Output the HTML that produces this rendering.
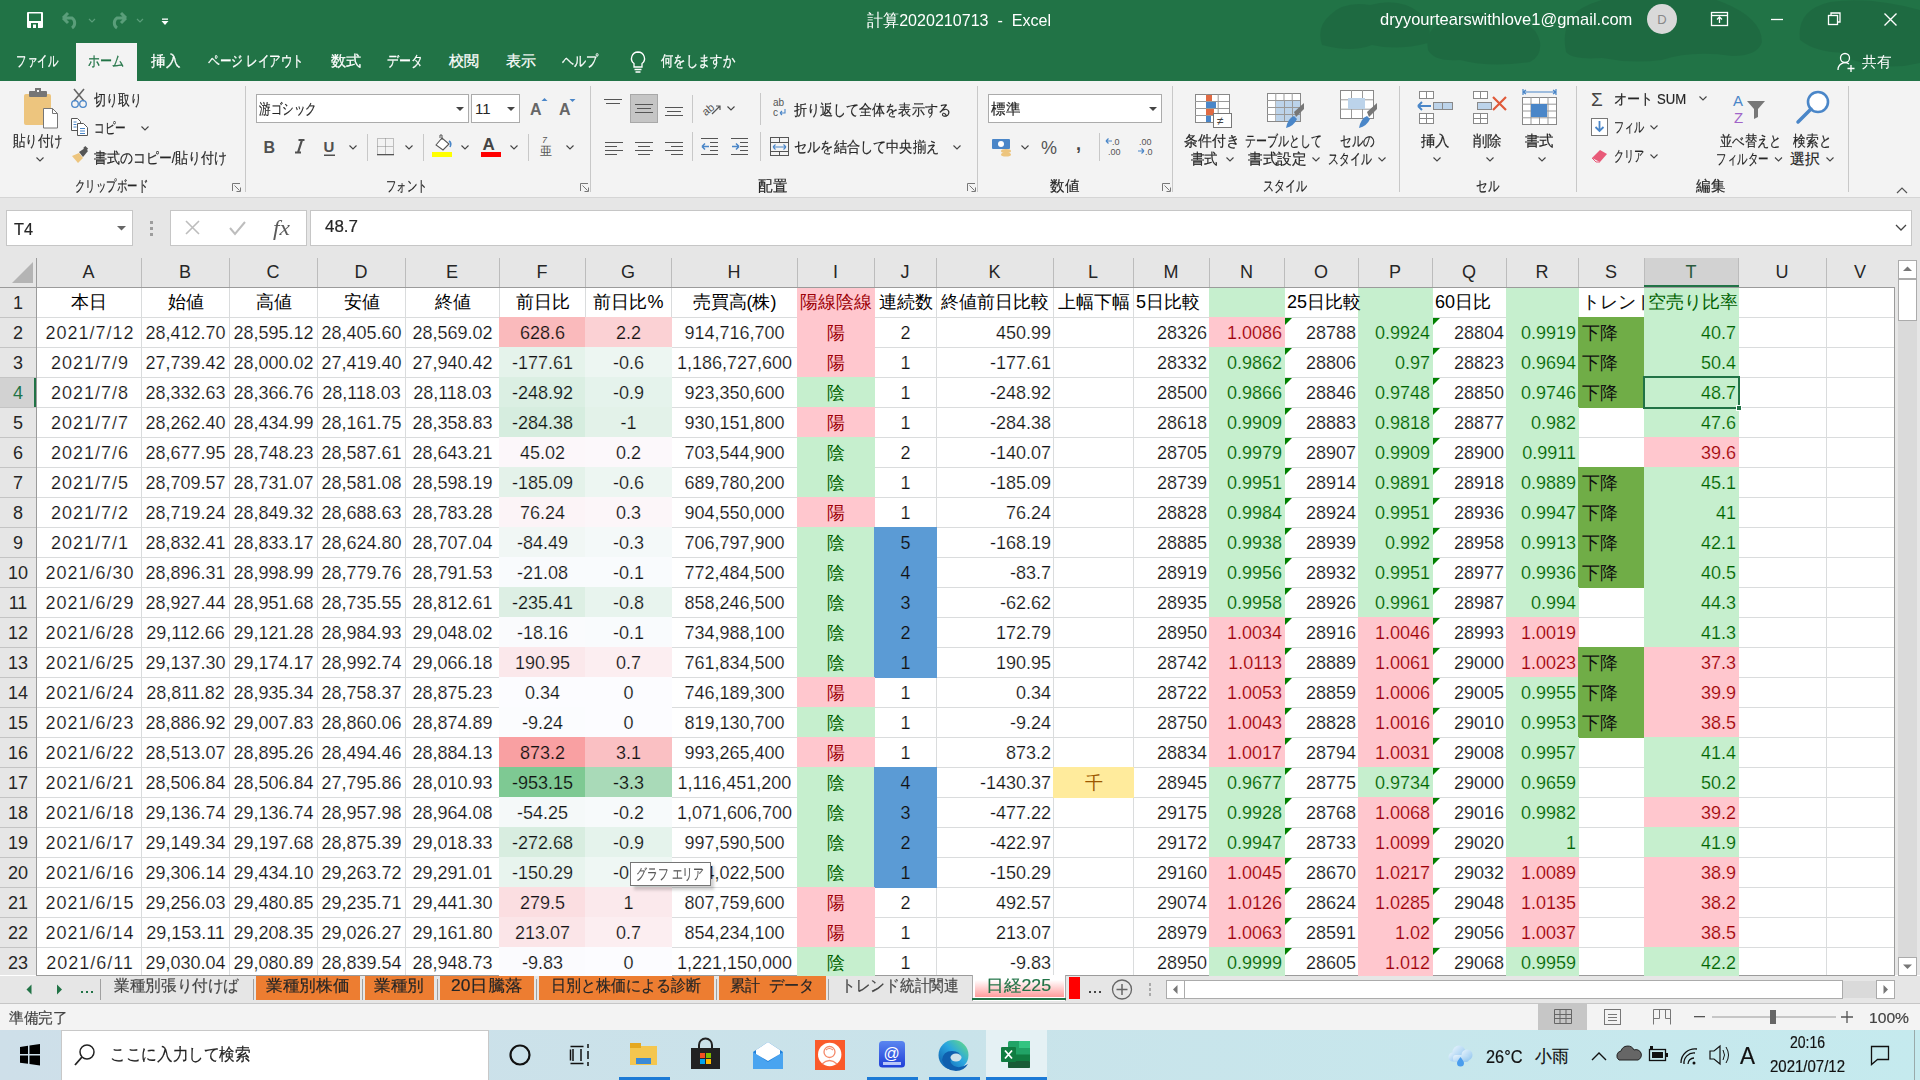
<!DOCTYPE html>
<html lang="ja"><head><meta charset="utf-8"><title>Excel</title>
<style>
html,body{margin:0;padding:0;width:1920px;height:1080px;overflow:hidden;background:#fff}
body{position:relative;font-family:"Liberation Sans",sans-serif;color:#262626}
body div,body svg{position:absolute;box-sizing:border-box}
</style></head><body>
<div style="left:0px;top:0px;width:1920px;height:81px;background:#217346"></div>
<svg style="left:1280px;top:0" width="640" height="81" viewBox="1280 0 640 81">
<g fill="#1e6840" opacity=".75">
<path d="M1322 45 q-6 -18 8 -30 q14 -14 40 -10 q30 -8 50 8 q14 12 8 30 q-30 8 -56 2 q-20 8 -50 0 z"/>
<path d="M1428 50 q-4 -22 18 -30 q28 -12 60 -4 q30 6 34 26 q2 14 -10 20 q-40 6 -70 -2 q-26 2 -32 -10 z"/>
<path d="M1566 52 q-6 -30 16 -44 q30 -16 70 -12 q34 -8 70 6 q40 16 40 40 q-4 14 -30 14 q-40 -6 -70 4 q-30 4 -60 -2 q-30 2 -36 -6 z"/>
<path d="M1800 40 q-4 -30 30 -38 q40 -6 90 8 v40 q-30 8 -60 2 q-40 4 -60 -12 z"/>
<path d="M1840 55 q0 -20 30 -26 q30 -4 50 6 v28 q-40 10 -80 -8 z"/>
</g></svg>
<svg style="left:0;top:0" width="200" height="40" viewBox="0 0 200 40">
<rect x="27" y="12" width="16" height="16" rx="1" fill="#fff"/>
<rect x="29" y="13.5" width="12" height="7.5" fill="#217346"/>
<rect x="31" y="23" width="7" height="5" fill="#217346"/>
<rect x="33" y="24.5" width="3" height="3.5" fill="#fff"/>
<path d="M63 18 l5 -5 M63 18 l5 5 M63 18 h9 a6 6 0 0 1 0 10" fill="none" stroke="#5a9e7a" stroke-width="3"/>
<path d="M89 19 l3 3 l3 -3" fill="none" stroke="#5a9e7a" stroke-width="1.2"/>
<path d="M126 18 l-5 -5 M126 18 l-5 5 M126 18 h-9 a6 6 0 0 0 0 10" fill="none" stroke="#5a9e7a" stroke-width="3"/>
<path d="M137 19 l3 3 l3 -3" fill="none" stroke="#5a9e7a" stroke-width="1.2"/>
<rect x="162" y="18.5" width="6" height="1.3" fill="#fff"/>
<path d="M161.5 21 h7 l-3.5 4 z" fill="#fff"/>
</svg>
<div style="left:867px;top:8.5px;height:24px;line-height:24px;white-space:pre;color:#fff;font-size:17px;"><span style="display:inline-block;transform:scaleX(0.9452);transform-origin:0 50%">計算2020210713  -  Excel</span></div>
<div style="left:1380px;top:8.0px;height:24px;line-height:24px;white-space:pre;color:#fff;font-size:17px;"><span style="display:inline-block;transform:scaleX(0.9701);transform-origin:0 50%">dryyourtearswithlove1@gmail.com</span></div>
<div style="left:1647px;top:4px;width:30px;height:30px;border-radius:50%;background:#d9d9d9;color:#888;font-size:13px;line-height:31px;text-align:center">D</div>
<svg style="left:1700px;top:0" width="220" height="40" viewBox="1700 0 220 40">
<rect x="1711.5" y="12.5" width="16" height="13" fill="none" stroke="#fff" stroke-width="1.3"/>
<path d="M1712 15.5 h15" stroke="#fff" stroke-width="1.3"/>
<path d="M1719.5 23 v-6 M1717 19.5 l2.5 -2.5 l2.5 2.5" fill="none" stroke="#fff" stroke-width="1.3"/>
<path d="M1771 19.5 h12" stroke="#fff" stroke-width="1.3"/>
<rect x="1828.5" y="15.5" width="9" height="9" fill="none" stroke="#fff" stroke-width="1.3"/>
<path d="M1831 15.5 v-2.5 h9 v9 h-2.5" fill="none" stroke="#fff" stroke-width="1.3"/>
<path d="M1884.5 13.5 l12 12 M1896.5 13.5 l-12 12" stroke="#fff" stroke-width="1.4"/>
</svg>
<div style="left:76px;top:43px;width:61px;height:38px;background:#f3f3f3"></div>
<div style="left:87.7px;top:49.0px;height:24px;line-height:24px;white-space:pre;color:#217346;font-size:15px;-webkit-text-stroke:0.25px #217346;"><span style="display:inline-block;transform:scaleX(0.8067);transform-origin:0 50%">ホーム</span></div>
<div style="left:15.8px;top:49.0px;height:24px;line-height:24px;white-space:pre;color:#fff;font-size:15px;-webkit-text-stroke:0.25px #fff;"><span style="display:inline-block;transform:scaleX(0.7000);transform-origin:0 50%">ファイル</span></div>
<div style="left:150.8px;top:49.0px;height:24px;line-height:24px;white-space:pre;color:#fff;font-size:15px;-webkit-text-stroke:0.25px #fff;"><span style="display:inline-block;transform:scaleX(0.9733);transform-origin:0 50%">挿入</span></div>
<div style="left:207.8px;top:49.0px;height:24px;line-height:24px;white-space:pre;color:#fff;font-size:15px;-webkit-text-stroke:0.25px #fff;"><span style="display:inline-block;transform:scaleX(0.7731);transform-origin:0 50%">ページ レイアウト</span></div>
<div style="left:330.9px;top:49.0px;height:24px;line-height:24px;white-space:pre;color:#fff;font-size:15px;-webkit-text-stroke:0.25px #fff;"><span style="display:inline-block;transform:scaleX(1.0100);transform-origin:0 50%">数式</span></div>
<div style="left:387px;top:49.0px;height:24px;line-height:24px;white-space:pre;color:#fff;font-size:15px;-webkit-text-stroke:0.25px #fff;"><span style="display:inline-block;transform:scaleX(0.8000);transform-origin:0 50%">データ</span></div>
<div style="left:449px;top:49.0px;height:24px;line-height:24px;white-space:pre;color:#fff;font-size:15px;-webkit-text-stroke:0.25px #fff;"><span style="display:inline-block;transform:scaleX(1.0000);transform-origin:0 50%">校閲</span></div>
<div style="left:506px;top:49.0px;height:24px;line-height:24px;white-space:pre;color:#fff;font-size:15px;-webkit-text-stroke:0.25px #fff;"><span style="display:inline-block;transform:scaleX(1.0000);transform-origin:0 50%">表示</span></div>
<div style="left:562px;top:49.0px;height:24px;line-height:24px;white-space:pre;color:#fff;font-size:15px;-webkit-text-stroke:0.25px #fff;"><span style="display:inline-block;transform:scaleX(0.8000);transform-origin:0 50%">ヘルプ</span></div>
<div style="left:661px;top:49.0px;height:24px;line-height:24px;white-space:pre;color:#fff;font-size:15px;-webkit-text-stroke:0.25px #fff;"><span style="display:inline-block;transform:scaleX(0.8222);transform-origin:0 50%">何をしますか</span></div>
<svg style="left:625px;top:48px" width="26" height="28" viewBox="0 0 26 28">
<path d="M13 4 a6.5 6.5 0 0 0 -4 11.6 v3.4 h8 v-3.4 a6.5 6.5 0 0 0 -4 -11.6 z" fill="none" stroke="#fff" stroke-width="1.3"/>
<path d="M9.5 21.5 h7 M10.5 24 h5" stroke="#fff" stroke-width="1.3"/>
</svg>
<svg style="left:1835px;top:50px" width="24" height="24" viewBox="0 0 24 24">
<circle cx="10" cy="8" r="4.5" fill="none" stroke="#fff" stroke-width="1.3"/>
<path d="M3 20 a7 7 0 0 1 11 -6" fill="none" stroke="#fff" stroke-width="1.3"/>
<path d="M16 15 v7 M12.5 18.5 h7" stroke="#fff" stroke-width="1.3"/>
</svg>
<div style="left:1861.8px;top:50.0px;height:24px;line-height:24px;white-space:pre;color:#fff;font-size:15px;"><span style="display:inline-block;transform:scaleX(0.9733);transform-origin:0 50%">共有</span></div>
<div style="left:0px;top:81px;width:1920px;height:116px;background:#f3f3f3"></div>
<div style="left:0px;top:197px;width:1920px;height:1px;background:#d5d5d5"></div>
<div style="left:12.5px;top:129.0px;height:24px;line-height:24px;white-space:pre;color:#262626;font-size:15px;-webkit-text-stroke:0.2px #262626;"><span style="display:inline-block;transform:scaleX(0.8333);transform-origin:0 50%">貼り付け</span></div>
<div style="left:94px;top:88.0px;height:24px;line-height:24px;white-space:pre;color:#262626;font-size:15px;-webkit-text-stroke:0.2px #262626;"><span style="display:inline-block;transform:scaleX(0.8000);transform-origin:0 50%">切り取り</span></div>
<div style="left:94px;top:116.0px;height:24px;line-height:24px;white-space:pre;color:#262626;font-size:15px;-webkit-text-stroke:0.2px #262626;"><span style="display:inline-block;transform:scaleX(0.7111);transform-origin:0 50%">コピー</span></div>
<div style="left:94px;top:145.5px;height:24px;line-height:24px;white-space:pre;color:#262626;font-size:15px;-webkit-text-stroke:0.2px #262626;"><span style="display:inline-block;transform:scaleX(0.8627);transform-origin:0 50%">書式のコピー/貼り付け</span></div>
<div style="left:75px;top:174.0px;height:24px;line-height:24px;white-space:pre;color:#262626;font-size:15px;-webkit-text-stroke:0.2px #262626;"><span style="display:inline-block;transform:scaleX(0.6952);transform-origin:0 50%">クリップボード</span></div>
<div style="left:256px;top:94px;width:213px;height:29px;background:#fff;border:1px solid #ababab"></div>
<div style="left:471px;top:94px;width:49px;height:29px;background:#fff;border:1px solid #ababab"></div>
<div style="left:259px;top:97.0px;height:24px;line-height:24px;white-space:pre;color:#262626;font-size:15px;-webkit-text-stroke:0.2px #262626;"><span style="display:inline-block;transform:scaleX(0.7733);transform-origin:0 50%">游ゴシック</span></div>
<div style="left:475px;top:96.5px;width:400px;height:24px;line-height:24px;text-align:left;white-space:nowrap;color:#262626;font-size:15px;">11</div>
<div style="left:386px;top:174.0px;height:24px;line-height:24px;white-space:pre;color:#262626;font-size:15px;-webkit-text-stroke:0.2px #262626;"><span style="display:inline-block;transform:scaleX(0.6933);transform-origin:0 50%">フォント</span></div>
<div style="left:794px;top:98.0px;height:24px;line-height:24px;white-space:pre;color:#262626;font-size:15px;-webkit-text-stroke:0.2px #262626;"><span style="display:inline-block;transform:scaleX(0.8706);transform-origin:0 50%">折り返して全体を表示する</span></div>
<div style="left:794px;top:135.0px;height:24px;line-height:24px;white-space:pre;color:#262626;font-size:15px;-webkit-text-stroke:0.2px #262626;"><span style="display:inline-block;transform:scaleX(0.8788);transform-origin:0 50%">セルを結合して中央揃え</span></div>
<div style="left:758px;top:174.0px;height:24px;line-height:24px;white-space:pre;color:#262626;font-size:15px;-webkit-text-stroke:0.2px #262626;"><span style="display:inline-block;transform:scaleX(0.9667);transform-origin:0 50%">配置</span></div>
<div style="left:988px;top:94px;width:174px;height:29px;background:#fff;border:1px solid #ababab"></div>
<div style="left:991px;top:97.0px;height:24px;line-height:24px;white-space:pre;color:#262626;font-size:15px;-webkit-text-stroke:0.2px #262626;"><span style="display:inline-block;transform:scaleX(0.9667);transform-origin:0 50%">標準</span></div>
<div style="left:1050px;top:174.0px;height:24px;line-height:24px;white-space:pre;color:#262626;font-size:15px;-webkit-text-stroke:0.2px #262626;"><span style="display:inline-block;transform:scaleX(0.9667);transform-origin:0 50%">数値</span></div>
<div style="left:1184px;top:128.7px;height:24px;line-height:24px;white-space:pre;color:#262626;font-size:15px;-webkit-text-stroke:0.2px #262626;"><span style="display:inline-block;transform:scaleX(0.9267);transform-origin:0 50%">条件付き</span></div>
<div style="left:1190.9px;top:147.3px;height:24px;line-height:24px;white-space:pre;color:#262626;font-size:15px;-webkit-text-stroke:0.2px #262626;"><span style="display:inline-block;transform:scaleX(0.8967);transform-origin:0 50%">書式</span></div>
<div style="left:1245.3px;top:128.7px;height:24px;line-height:24px;white-space:pre;color:#262626;font-size:15px;-webkit-text-stroke:0.2px #262626;"><span style="display:inline-block;transform:scaleX(0.7305);transform-origin:0 50%">テーブルとして</span></div>
<div style="left:1247.6px;top:147.3px;height:24px;line-height:24px;white-space:pre;color:#262626;font-size:15px;-webkit-text-stroke:0.2px #262626;"><span style="display:inline-block;transform:scaleX(0.9733);transform-origin:0 50%">書式設定</span></div>
<div style="left:1340.4px;top:128.7px;height:24px;line-height:24px;white-space:pre;color:#262626;font-size:15px;-webkit-text-stroke:0.2px #262626;"><span style="display:inline-block;transform:scaleX(0.7778);transform-origin:0 50%">セルの</span></div>
<div style="left:1327.8px;top:147.3px;height:24px;line-height:24px;white-space:pre;color:#262626;font-size:15px;-webkit-text-stroke:0.2px #262626;"><span style="display:inline-block;transform:scaleX(0.7267);transform-origin:0 50%">スタイル</span></div>
<div style="left:1262.8px;top:174.0px;height:24px;line-height:24px;white-space:pre;color:#262626;font-size:15px;-webkit-text-stroke:0.2px #262626;"><span style="display:inline-block;transform:scaleX(0.7367);transform-origin:0 50%">スタイル</span></div>
<div style="left:1420.8px;top:128.7px;height:24px;line-height:24px;white-space:pre;color:#262626;font-size:15px;-webkit-text-stroke:0.2px #262626;"><span style="display:inline-block;transform:scaleX(0.9633);transform-origin:0 50%">挿入</span></div>
<div style="left:1473px;top:128.7px;height:24px;line-height:24px;white-space:pre;color:#262626;font-size:15px;-webkit-text-stroke:0.2px #262626;"><span style="display:inline-block;transform:scaleX(0.9600);transform-origin:0 50%">削除</span></div>
<div style="left:1525px;top:128.7px;height:24px;line-height:24px;white-space:pre;color:#262626;font-size:15px;-webkit-text-stroke:0.2px #262626;"><span style="display:inline-block;transform:scaleX(0.9600);transform-origin:0 50%">書式</span></div>
<div style="left:1476px;top:174.0px;height:24px;line-height:24px;white-space:pre;color:#262626;font-size:15px;-webkit-text-stroke:0.2px #262626;"><span style="display:inline-block;transform:scaleX(0.7667);transform-origin:0 50%">セル</span></div>
<div style="left:1613.5px;top:86.5px;height:24px;line-height:24px;white-space:pre;color:#262626;font-size:15px;-webkit-text-stroke:0.2px #262626;"><span style="display:inline-block;transform:scaleX(0.8739);transform-origin:0 50%">オート SUM</span></div>
<div style="left:1613.5px;top:115.0px;height:24px;line-height:24px;white-space:pre;color:#262626;font-size:15px;-webkit-text-stroke:0.2px #262626;"><span style="display:inline-block;transform:scaleX(0.6778);transform-origin:0 50%">フィル</span></div>
<div style="left:1613.5px;top:144.0px;height:24px;line-height:24px;white-space:pre;color:#262626;font-size:15px;-webkit-text-stroke:0.2px #262626;"><span style="display:inline-block;transform:scaleX(0.6778);transform-origin:0 50%">クリア</span></div>
<div style="left:1719.5px;top:128.7px;height:24px;line-height:24px;white-space:pre;color:#262626;font-size:15px;-webkit-text-stroke:0.2px #262626;"><span style="display:inline-block;transform:scaleX(0.8200);transform-origin:0 50%">並べ替えと</span></div>
<div style="left:1716px;top:147.3px;height:24px;line-height:24px;white-space:pre;color:#262626;font-size:15px;-webkit-text-stroke:0.2px #262626;"><span style="display:inline-block;transform:scaleX(0.7000);transform-origin:0 50%">フィルター</span></div>
<div style="left:1792.7px;top:128.7px;height:24px;line-height:24px;white-space:pre;color:#262626;font-size:15px;-webkit-text-stroke:0.2px #262626;"><span style="display:inline-block;transform:scaleX(0.8511);transform-origin:0 50%">検索と</span></div>
<div style="left:1790px;top:147.3px;height:24px;line-height:24px;white-space:pre;color:#262626;font-size:15px;-webkit-text-stroke:0.2px #262626;"><span style="display:inline-block;transform:scaleX(1.0000);transform-origin:0 50%">選択</span></div>
<div style="left:1696px;top:174.0px;height:24px;line-height:24px;white-space:pre;color:#262626;font-size:15px;-webkit-text-stroke:0.2px #262626;"><span style="display:inline-block;transform:scaleX(0.9667);transform-origin:0 50%">編集</span></div>
<svg style="left:0;top:81px" width="1920" height="116" viewBox="0 81 1920 116"><rect x="245" y="86" width="1" height="106" fill="#c8c8c8"/><rect x="590" y="86" width="1" height="106" fill="#c8c8c8"/><rect x="977" y="86" width="1" height="106" fill="#c8c8c8"/><rect x="1172" y="86" width="1" height="106" fill="#c8c8c8"/><rect x="1399" y="86" width="1" height="106" fill="#c8c8c8"/><rect x="1576" y="86" width="1" height="106" fill="#c8c8c8"/><rect x="1848" y="86" width="1" height="106" fill="#c8c8c8"/><rect x="367" y="134" width="1" height="27" fill="#c8c8c8"/><rect x="423" y="134" width="1" height="27" fill="#c8c8c8"/><rect x="528" y="134" width="1" height="27" fill="#c8c8c8"/><rect x="692" y="95" width="1" height="28" fill="#c8c8c8"/><rect x="692" y="132" width="1" height="29" fill="#c8c8c8"/><rect x="760" y="93" width="1" height="32" fill="#c8c8c8"/><rect x="760" y="132" width="1" height="29" fill="#c8c8c8"/><rect x="1099" y="133" width="1" height="28" fill="#c8c8c8"/><path d="M232.5 191 v-7.5 h7.5" fill="none" stroke="#777" stroke-width="1"/><path d="M234.5 185.5 l5 5 M240.5 187.5 v4 h-4" fill="none" stroke="#777" stroke-width="1"/><path d="M580.5 191 v-7.5 h7.5" fill="none" stroke="#777" stroke-width="1"/><path d="M582.5 185.5 l5 5 M588.5 187.5 v4 h-4" fill="none" stroke="#777" stroke-width="1"/><path d="M967.5 191 v-7.5 h7.5" fill="none" stroke="#777" stroke-width="1"/><path d="M969.5 185.5 l5 5 M975.5 187.5 v4 h-4" fill="none" stroke="#777" stroke-width="1"/><path d="M1162.5 191 v-7.5 h7.5" fill="none" stroke="#777" stroke-width="1"/><path d="M1164.5 185.5 l5 5 M1170.5 187.5 v4 h-4" fill="none" stroke="#777" stroke-width="1"/><rect x="24" y="94" width="27" height="31" rx="2" fill="#edc57e"/><rect x="29" y="91" width="18" height="6" rx="1" fill="#767676"/><rect x="35" y="88" width="6" height="5" fill="#767676"/><rect x="37" y="90" width="2" height="2" fill="#f3f3f3"/><path d="M43.5 108.5 h9 l5 5 v14.5 h-14 z" fill="#fff" stroke="#767676" stroke-width="1"/><path d="M52.5 108.5 v5 h5" fill="none" stroke="#767676" stroke-width="1"/><path d="M36.5 157.5 l3.5 3.5 l3.5 -3.5" fill="none" stroke="#444" stroke-width="1.1"/><path d="M74 89 l10 12 M84 89 l-10 12" stroke="#666" stroke-width="1.6"/><circle cx="75" cy="104" r="3.3" fill="none" stroke="#4a86c8" stroke-width="1.3"/><circle cx="83" cy="104" r="3.3" fill="none" stroke="#4a86c8" stroke-width="1.3"/><path d="M71.5 118.5 h6 l3 3 v9 h-9 z" fill="#fff" stroke="#555" stroke-width="1"/><path d="M77.5 123.5 h6 l4 4 v8 h-10 z" fill="#fff" stroke="#555" stroke-width="1"/><path d="M80 128.5 h5 M80 131 h5 M80 133.5 h5" stroke="#4a86c8" stroke-width="1"/><path d="M73.5 122 h3 M73.5 124.5 h3 M73.5 127 h3" stroke="#4a86c8" stroke-width="1"/><path d="M141.5 126.5 l3.5 3.5 l3.5 -3.5" fill="none" stroke="#444" stroke-width="1.1"/><path d="M72 156 l7 -3 l4 5 l-5 5 z" fill="#edc57e"/><path d="M79 152 l6 -4 l3 3 l-5 6 z" fill="#555"/><rect x="84" y="147" width="4" height="3" fill="#555" transform="rotate(45 86 148)"/><path d="M456 107 h8 l-4 4 z" fill="#444"/><path d="M507 107 h8 l-4 4 z" fill="#444"/><text x="530" y="115" font-size="16" font-weight="bold" fill="#666" font-family="Liberation Sans">A</text><path d="M541.5 101 l3 -3 l3 3 z" fill="#4a86c8"/><text x="559" y="115" font-size="16" font-weight="bold" fill="#666" font-family="Liberation Sans">A</text><path d="M569.5 99 h6 l-3 3 z" fill="#4a86c8"/><text x="263.5" y="153" font-size="16" font-weight="bold" fill="#505050" font-family="Liberation Sans">B</text><path d="M298.5 140 h6 M295 152.5 h6 M302 140 l-4 12.5" fill="none" stroke="#505050" stroke-width="2.2"/><text x="323.5" y="152" font-size="15" font-weight="bold" fill="#505050" font-family="Liberation Sans">U</text><rect x="324" y="154.5" width="11" height="1.5" fill="#505050"/><path d="M349.5 145.5 l3.5 3.5 l3.5 -3.5" fill="none" stroke="#444" stroke-width="1.1"/><path d="M377.5 138.5 h16 v16 h-16 z M385.5 138.5 v16 M377.5 146.5 h16" fill="none" stroke="#888" stroke-width="1" stroke-dasharray="1 1"/><rect x="377" y="154" width="17" height="1.3" fill="#555"/><path d="M405.5 145.5 l3.5 3.5 l3.5 -3.5" fill="none" stroke="#444" stroke-width="1.1"/><path d="M436 145 l6 -7 l7 6 l-6 6 z" fill="#fff" stroke="#555" stroke-width="1.1"/><path d="M440 138 v-3 h2 v5" fill="none" stroke="#555" stroke-width="1"/><path d="M449 141 q3 2 1 6" fill="none" stroke="#4a86c8" stroke-width="1.6"/><rect x="432" y="152" width="20" height="5" fill="#ffff00"/><path d="M461.5 145.5 l3.5 3.5 l3.5 -3.5" fill="none" stroke="#444" stroke-width="1.1"/><text x="482.5" y="150" font-size="17" font-weight="bold" fill="#444" font-family="Liberation Sans">A</text><rect x="481" y="152" width="20" height="5" fill="#ff0000"/><path d="M510.5 145.5 l3.5 3.5 l3.5 -3.5" fill="none" stroke="#444" stroke-width="1.1"/><text x="542" y="143" font-size="9" fill="#555" font-family="Liberation Sans" font-style="italic">7</text><text x="540" y="155" font-size="12" fill="#555">亜</text><path d="M566.5 145.5 l3.5 3.5 l3.5 -3.5" fill="none" stroke="#444" stroke-width="1.1"/><rect x="630.5" y="94.5" width="27" height="28" fill="#c5c5c5" stroke="#a8a8a8"/><path d="M604 99.5 h18 M606 103.5 h14" stroke="#555" stroke-width="1"/><path d="M635 104.5 h18 M637 108.5 h14 M635 112.5 h18" stroke="#555" stroke-width="1"/><path d="M665 107.5 h18 M667 111.5 h14 M665 115.5 h18" stroke="#555" stroke-width="1"/><text x="701" y="113" font-size="11" fill="#555" transform="rotate(-40 708 108)" font-family="Liberation Sans">ab</text><path d="M712 114 l8 -8 M716 106 h4 v4" fill="none" stroke="#555" stroke-width="1.2"/><path d="M727.5 106.5 l3.5 3.5 l3.5 -3.5" fill="none" stroke="#444" stroke-width="1.1"/><text x="773" y="106" font-size="10" fill="#555" font-family="Liberation Sans">ab</text><text x="773" y="116" font-size="10" fill="#555" font-family="Liberation Sans">c</text><path d="M780 113 h5 v-4 M780 113 l2 -2 M780 113 l2 2" fill="none" stroke="#4a86c8" stroke-width="1.1"/><path d="M605 142.5 h18 M605 146.5 h12 M605 150.5 h18 M605 154.5 h12" stroke="#555" stroke-width="1"/><path d="M635 142.5 h18 M638 146.5 h12 M635 150.5 h18 M638 154.5 h12" stroke="#555" stroke-width="1"/><path d="M665 142.5 h18 M671 146.5 h12 M665 150.5 h18 M671 154.5 h12" stroke="#555" stroke-width="1"/><path d="M710 142.5 h8 M710 146.5 h8 M710 150.5 h8 M701 154.5 h17 M701 138.5 h17" stroke="#555" stroke-width="1"/><path d="M702 146.5 h7 M702 146.5 l3 -3 M702 146.5 l3 3" fill="none" stroke="#4a86c8" stroke-width="1.5"/><path d="M740 142.5 h8 M740 146.5 h8 M740 150.5 h8 M731 154.5 h17 M731 138.5 h17" stroke="#555" stroke-width="1"/><path d="M732 146.5 h7 M739 146.5 l-3 -3 M739 146.5 l-3 3" fill="none" stroke="#4a86c8" stroke-width="1.5"/><rect x="770.5" y="137.5" width="18" height="18" fill="none" stroke="#555"/><path d="M770.5 142.5 h18 M770.5 151.5 h18 M779.5 137.5 v5 M779.5 151.5 v4" stroke="#555" stroke-width="1"/><path d="M773 147 h13 M773 147 l2.5 -2.5 M773 147 l2.5 2.5 M786 147 l-2.5 -2.5 M786 147 l-2.5 2.5" fill="none" stroke="#4a86c8" stroke-width="1.1"/><path d="M953.5 145.5 l3.5 3.5 l3.5 -3.5" fill="none" stroke="#444" stroke-width="1.1"/><path d="M1149 107 h8 l-4 4 z" fill="#444"/><rect x="992" y="139" width="18" height="10" rx="1" fill="#4a86c8"/><circle cx="1001" cy="144" r="3" fill="#fff"/><ellipse cx="1006" cy="151" rx="5" ry="2" fill="#edc57e"/><ellipse cx="1006" cy="154.5" rx="5" ry="2" fill="#edc57e"/><path d="M1021.5 145.5 l3.5 3.5 l3.5 -3.5" fill="none" stroke="#444" stroke-width="1.1"/><text x="1041" y="154" font-size="18" fill="#555" font-family="Liberation Sans">%</text><text x="1076" y="150" font-size="18" font-weight="bold" fill="#444" font-family="Liberation Sans">,</text><text x="1112" y="145" font-size="9" fill="#555" font-family="Liberation Sans">.0</text><text x="1108" y="155" font-size="9" fill="#555" font-family="Liberation Sans">.00</text><path d="M1106 141 h6 M1106 141 l2.5 -2.5 M1106 141 l2.5 2.5" fill="none" stroke="#4a86c8" stroke-width="1.2"/><text x="1139" y="145" font-size="9" fill="#555" font-family="Liberation Sans">.00</text><text x="1145" y="155" font-size="9" fill="#555" font-family="Liberation Sans">.0</text><path d="M1138 151 h6 M1144 151 l-2.5 -2.5 M1144 151 l-2.5 2.5" fill="none" stroke="#4a86c8" stroke-width="1.2"/><rect x="1195.5" y="94.5" width="34" height="28" fill="#fff" stroke="#888"/><path d="M1206.8 94 v28" stroke="#999" stroke-width="1"/><path d="M1218.2 94 v28" stroke="#999" stroke-width="1"/><path d="M1195 101.5 h34" stroke="#999" stroke-width="1"/><path d="M1195 108.5 h34" stroke="#999" stroke-width="1"/><path d="M1195 115.5 h34" stroke="#999" stroke-width="1"/><rect x="1206" y="95" width="6" height="6" fill="#e06a43"/><rect x="1206" y="102" width="10" height="6" fill="#4a86c8"/><rect x="1206" y="109" width="8" height="6" fill="#e06a43"/><rect x="1206" y="116" width="5" height="6" fill="#4a86c8"/><rect x="1213.5" y="113.5" width="18" height="14" fill="#fff" stroke="#777"/><text x="1217" y="125" font-size="12" fill="#444" font-family="Liberation Sans">≠</text><rect x="1267.5" y="93.5" width="33" height="28" fill="#fff" stroke="#888"/><path d="M1275.8 93 v28" stroke="#999" stroke-width="1"/><path d="M1284.0 93 v28" stroke="#999" stroke-width="1"/><path d="M1292.2 93 v28" stroke="#999" stroke-width="1"/><path d="M1267 100.5 h33" stroke="#999" stroke-width="1"/><path d="M1267 107.5 h33" stroke="#999" stroke-width="1"/><path d="M1267 114.5 h33" stroke="#999" stroke-width="1"/><rect x="1276" y="101" width="24" height="20" fill="#bcd3ea"/><path d="M1276 100.5 h24 M1276 107.5 h24 M1276 114.5 h24 M1284.5 101 v20 M1292.5 101 v20" stroke="#999" stroke-width="1"/><path d="M1294 112 l10 -9 v6 l-8 8 z" fill="#777"/><path d="M1286 128 q2 -10 8 -12 l3 3 q-3 7 -11 9 z" fill="#4a86c8"/><rect x="1340.5" y="90.5" width="33" height="28" fill="#fff" stroke="#888"/><path d="M1351.5 90 v28" stroke="#999" stroke-width="1"/><path d="M1362.5 90 v28" stroke="#999" stroke-width="1"/><path d="M1340 99.8 h33" stroke="#999" stroke-width="1"/><path d="M1340 109.2 h33" stroke="#999" stroke-width="1"/><rect x="1348" y="98" width="17" height="11" fill="#bcd3ea"/><path d="M1367 112 l10 -9 v6 l-8 8 z" fill="#777"/><path d="M1359 128 q2 -10 8 -12 l3 3 q-3 7 -11 9 z" fill="#4a86c8"/><path d="M1226.5 157.5 l3.5 3.5 l3.5 -3.5" fill="none" stroke="#444" stroke-width="1.1"/><path d="M1312.5 157.5 l3.5 3.5 l3.5 -3.5" fill="none" stroke="#444" stroke-width="1.1"/><path d="M1378.5 157.5 l3.5 3.5 l3.5 -3.5" fill="none" stroke="#444" stroke-width="1.1"/><rect x="1419.5" y="91.5" width="14" height="7" fill="#fff" stroke="#888"/><rect x="1419.5" y="113.5" width="14" height="10" fill="#fff" stroke="#888"/><path d="M1426.5 91.5 v7 M1426.5 113.5 v10 M1419.5 118.5 h14" stroke="#888"/><rect x="1433.5" y="102.5" width="19" height="7" fill="#bcd3ea" stroke="#888"/><path d="M1442.5 102.5 v7" stroke="#888"/><path d="M1418 106 h13 M1418 106 l4 -4 M1418 106 l4 4" fill="none" stroke="#4a86c8" stroke-width="2"/><path d="M1433.5 157.5 l3.5 3.5 l3.5 -3.5" fill="none" stroke="#444" stroke-width="1.1"/><rect x="1473.5" y="91.5" width="14" height="7" fill="#fff" stroke="#888"/><rect x="1473.5" y="113.5" width="14" height="10" fill="#fff" stroke="#888"/><path d="M1480.5 91.5 v7 M1480.5 113.5 v10 M1473.5 118.5 h14" stroke="#888"/><rect x="1477.5" y="102.5" width="14" height="7" fill="#bcd3ea" stroke="#888"/><path d="M1493 97 l13 13 M1506 97 l-13 13" stroke="#e05a3a" stroke-width="2.2"/><path d="M1486.5 157.5 l3.5 3.5 l3.5 -3.5" fill="none" stroke="#444" stroke-width="1.1"/><path d="M1523 92 h33 M1523 89 v6 M1556 89 v6 M1523 92 l3 -2 M1523 92 l3 2 M1556 92 l-3 -2 M1556 92 l-3 2" fill="none" stroke="#4a86c8" stroke-width="1.2"/><rect x="1522.5" y="97.5" width="34" height="27" fill="#fff" stroke="#888"/><path d="M1531.0 97 v27" stroke="#999" stroke-width="1"/><path d="M1539.5 97 v27" stroke="#999" stroke-width="1"/><path d="M1548.0 97 v27" stroke="#999" stroke-width="1"/><path d="M1522 104.2 h34" stroke="#999" stroke-width="1"/><path d="M1522 111.0 h34" stroke="#999" stroke-width="1"/><path d="M1522 117.8 h34" stroke="#999" stroke-width="1"/><rect x="1531" y="104" width="16" height="13" fill="#4a86c8"/><path d="M1538.5 157.5 l3.5 3.5 l3.5 -3.5" fill="none" stroke="#444" stroke-width="1.1"/><text x="1591" y="106" font-size="19" fill="#444" font-family="Liberation Sans">Σ</text><path d="M1699.5 96.5 l3.5 3.5 l3.5 -3.5" fill="none" stroke="#444" stroke-width="1.1"/><rect x="1591.5" y="118.5" width="16" height="17" fill="#fff" stroke="#777"/><path d="M1599.5 121 v10 M1595.5 127 l4 4 l4 -4" fill="none" stroke="#4a86c8" stroke-width="1.8"/><path d="M1650.5 125.5 l3.5 3.5 l3.5 -3.5" fill="none" stroke="#444" stroke-width="1.1"/><path d="M1592 158 l8 -8 l7 4 l-7 8 z" fill="#e85a78"/><path d="M1592 158 l4 4 h4" fill="none" stroke="#e85a78" stroke-width="1"/><path d="M1650.5 154.5 l3.5 3.5 l3.5 -3.5" fill="none" stroke="#444" stroke-width="1.1"/><text x="1733" y="106" font-size="15" fill="#4a86c8" font-family="Liberation Sans">A</text><text x="1734" y="123" font-size="15" fill="#a064c8" font-family="Liberation Sans">Z</text><path d="M1747 101 h18 l-7 8 v8 l-4 2 v-10 z" fill="#777"/><path d="M1775.0 157.5 l3.5 3.5 l3.5 -3.5" fill="none" stroke="#444" stroke-width="1.1"/><circle cx="1818" cy="102" r="10" fill="#fff" stroke="#4a86c8" stroke-width="2.6"/><path d="M1811 109 l-13 13" stroke="#4a86c8" stroke-width="3.5" stroke-linecap="round"/><path d="M1826.5 157.5 l3.5 3.5 l3.5 -3.5" fill="none" stroke="#444" stroke-width="1.1"/><path d="M1897 193 l5 -5 l5 5" fill="none" stroke="#555" stroke-width="1.2"/></svg>
<div style="left:0px;top:198px;width:1920px;height:60px;background:#e6e6e6"></div>
<div style="left:6px;top:210px;width:127px;height:36px;background:#fff;border:1px solid #c6c6c6;box-sizing:border-box"></div>
<div style="left:14px;top:218.0px;height:24px;line-height:24px;white-space:pre;color:#262626;font-size:17px;-webkit-text-stroke:0.2px #262626;"><span style="display:inline-block;transform:scaleX(0.9575);transform-origin:0 50%">T4</span></div>
<svg style="left:116px;top:225px" width="12" height="8"><path d="M1 1 h9 l-4.5 4.5 z" fill="#666"/></svg>
<div style="left:150px;top:221px;width:3px;height:3px;background:#9d9d9d"></div>
<div style="left:150px;top:227px;width:3px;height:3px;background:#9d9d9d"></div>
<div style="left:150px;top:233px;width:3px;height:3px;background:#9d9d9d"></div>
<div style="left:170px;top:210px;width:137px;height:36px;background:#fff;border:1px solid #c6c6c6;box-sizing:border-box"></div>
<svg style="left:170px;top:210px" width="137" height="36" viewBox="170 210 137 36">
<path d="M186 221 l13 13 M199 221 l-13 13" stroke="#bdbdbd" stroke-width="1.6"/>
<path d="M230 228 l5 6 l10 -12" fill="none" stroke="#bdbdbd" stroke-width="2"/>
</svg>
<div style="left:273px;top:216.0px;height:24px;line-height:24px;white-space:pre;color:#5a5a5a;font-size:20px;font-family:'Liberation Serif',serif;font-style:italic;font-weight:bold-webkit-text-stroke:0.2px #5a5a5a;"><span style="display:inline-block;transform:scaleX(1.1775);transform-origin:0 50%">fx</span></div>
<div style="left:310px;top:210px;width:1602px;height:36px;background:#fff;border:1px solid #c6c6c6;box-sizing:border-box"></div>
<div style="left:325px;top:215.0px;height:24px;line-height:24px;white-space:pre;color:#262626;font-size:17px;-webkit-text-stroke:0.2px #262626;"><span style="display:inline-block;transform:scaleX(0.9972);transform-origin:0 50%">48.7</span></div>
<svg style="left:1895px;top:224px" width="12" height="8"><path d="M1 1 l5 5 l5 -5" fill="none" stroke="#444" stroke-width="1.3"/></svg>
<div style="left:37px;top:288px;width:1857px;height:687px;background:#fff"></div>
<div style="left:0px;top:258px;width:1895px;height:29px;background:#e6e6e6"></div>
<div style="left:0px;top:288px;width:36px;height:687px;background:#e6e6e6"></div>
<div style="left:141px;top:258px;width:1px;height:29px;background:#bcbcbc"></div>
<div style="left:229px;top:258px;width:1px;height:29px;background:#bcbcbc"></div>
<div style="left:317px;top:258px;width:1px;height:29px;background:#bcbcbc"></div>
<div style="left:405px;top:258px;width:1px;height:29px;background:#bcbcbc"></div>
<div style="left:499px;top:258px;width:1px;height:29px;background:#bcbcbc"></div>
<div style="left:585px;top:258px;width:1px;height:29px;background:#bcbcbc"></div>
<div style="left:671px;top:258px;width:1px;height:29px;background:#bcbcbc"></div>
<div style="left:797px;top:258px;width:1px;height:29px;background:#bcbcbc"></div>
<div style="left:874px;top:258px;width:1px;height:29px;background:#bcbcbc"></div>
<div style="left:936px;top:258px;width:1px;height:29px;background:#bcbcbc"></div>
<div style="left:1053px;top:258px;width:1px;height:29px;background:#bcbcbc"></div>
<div style="left:1133px;top:258px;width:1px;height:29px;background:#bcbcbc"></div>
<div style="left:1209px;top:258px;width:1px;height:29px;background:#bcbcbc"></div>
<div style="left:1284px;top:258px;width:1px;height:29px;background:#bcbcbc"></div>
<div style="left:1358px;top:258px;width:1px;height:29px;background:#bcbcbc"></div>
<div style="left:1432px;top:258px;width:1px;height:29px;background:#bcbcbc"></div>
<div style="left:1506px;top:258px;width:1px;height:29px;background:#bcbcbc"></div>
<div style="left:1578px;top:258px;width:1px;height:29px;background:#bcbcbc"></div>
<div style="left:1644px;top:258px;width:1px;height:29px;background:#bcbcbc"></div>
<div style="left:1738px;top:258px;width:1px;height:29px;background:#bcbcbc"></div>
<div style="left:1826px;top:258px;width:1px;height:29px;background:#bcbcbc"></div>
<div style="left:1645px;top:258px;width:93px;height:29px;background:#d2d2d2"></div>
<div style="left:1644px;top:285px;width:95px;height:2px;background:#217346"></div>
<div style="left:0px;top:287px;width:1894px;height:1px;background:#9b9b9b"></div>
<svg style="left:0;top:258px" width="36" height="29"><path d="M33 4 v21 h-21 z" fill="#b4b4b4"/></svg>
<div style="left:36px;top:258px;width:1px;height:717px;background:#9b9b9b"></div>
<div style="left:36px;top:258px;width:105px;height:29px;line-height:29px;text-align:center;white-space:nowrap;color:#262626;font-size:18px">A</div>
<div style="left:141px;top:258px;width:88px;height:29px;line-height:29px;text-align:center;white-space:nowrap;color:#262626;font-size:18px">B</div>
<div style="left:229px;top:258px;width:88px;height:29px;line-height:29px;text-align:center;white-space:nowrap;color:#262626;font-size:18px">C</div>
<div style="left:317px;top:258px;width:88px;height:29px;line-height:29px;text-align:center;white-space:nowrap;color:#262626;font-size:18px">D</div>
<div style="left:405px;top:258px;width:94px;height:29px;line-height:29px;text-align:center;white-space:nowrap;color:#262626;font-size:18px">E</div>
<div style="left:499px;top:258px;width:86px;height:29px;line-height:29px;text-align:center;white-space:nowrap;color:#262626;font-size:18px">F</div>
<div style="left:585px;top:258px;width:86px;height:29px;line-height:29px;text-align:center;white-space:nowrap;color:#262626;font-size:18px">G</div>
<div style="left:671px;top:258px;width:126px;height:29px;line-height:29px;text-align:center;white-space:nowrap;color:#262626;font-size:18px">H</div>
<div style="left:797px;top:258px;width:77px;height:29px;line-height:29px;text-align:center;white-space:nowrap;color:#262626;font-size:18px">I</div>
<div style="left:874px;top:258px;width:62px;height:29px;line-height:29px;text-align:center;white-space:nowrap;color:#262626;font-size:18px">J</div>
<div style="left:936px;top:258px;width:117px;height:29px;line-height:29px;text-align:center;white-space:nowrap;color:#262626;font-size:18px">K</div>
<div style="left:1053px;top:258px;width:80px;height:29px;line-height:29px;text-align:center;white-space:nowrap;color:#262626;font-size:18px">L</div>
<div style="left:1133px;top:258px;width:76px;height:29px;line-height:29px;text-align:center;white-space:nowrap;color:#262626;font-size:18px">M</div>
<div style="left:1209px;top:258px;width:75px;height:29px;line-height:29px;text-align:center;white-space:nowrap;color:#262626;font-size:18px">N</div>
<div style="left:1284px;top:258px;width:74px;height:29px;line-height:29px;text-align:center;white-space:nowrap;color:#262626;font-size:18px">O</div>
<div style="left:1358px;top:258px;width:74px;height:29px;line-height:29px;text-align:center;white-space:nowrap;color:#262626;font-size:18px">P</div>
<div style="left:1432px;top:258px;width:74px;height:29px;line-height:29px;text-align:center;white-space:nowrap;color:#262626;font-size:18px">Q</div>
<div style="left:1506px;top:258px;width:72px;height:29px;line-height:29px;text-align:center;white-space:nowrap;color:#262626;font-size:18px">R</div>
<div style="left:1578px;top:258px;width:66px;height:29px;line-height:29px;text-align:center;white-space:nowrap;color:#262626;font-size:18px">S</div>
<div style="left:1644px;top:258px;width:94px;height:29px;line-height:29px;text-align:center;white-space:nowrap;color:#2a5a3c;font-size:18px">T</div>
<div style="left:1738px;top:258px;width:88px;height:29px;line-height:29px;text-align:center;white-space:nowrap;color:#262626;font-size:18px">U</div>
<div style="left:1826px;top:258px;width:68px;height:29px;line-height:29px;text-align:center;white-space:nowrap;color:#262626;font-size:18px">V</div>
<div style="left:0px;top:288px;width:36px;height:30px;line-height:30px;text-align:center;white-space:nowrap;color:#262626;font-size:18px">1</div>
<div style="left:0px;top:317px;width:36px;height:1px;background:#c4c4c4"></div>
<div style="left:0px;top:318px;width:36px;height:30px;line-height:30px;text-align:center;white-space:nowrap;color:#262626;font-size:18px">2</div>
<div style="left:0px;top:347px;width:36px;height:1px;background:#c4c4c4"></div>
<div style="left:0px;top:348px;width:36px;height:30px;line-height:30px;text-align:center;white-space:nowrap;color:#262626;font-size:18px">3</div>
<div style="left:0px;top:378px;width:36px;height:29px;background:#d2d2d2"></div>
<div style="left:34px;top:377px;width:2px;height:31px;background:#217346"></div>
<div style="left:0px;top:377px;width:36px;height:1px;background:#c4c4c4"></div>
<div style="left:0px;top:378px;width:36px;height:30px;line-height:30px;text-align:center;white-space:nowrap;color:#217346;font-size:18px">4</div>
<div style="left:0px;top:407px;width:36px;height:1px;background:#c4c4c4"></div>
<div style="left:0px;top:408px;width:36px;height:30px;line-height:30px;text-align:center;white-space:nowrap;color:#262626;font-size:18px">5</div>
<div style="left:0px;top:437px;width:36px;height:1px;background:#c4c4c4"></div>
<div style="left:0px;top:438px;width:36px;height:30px;line-height:30px;text-align:center;white-space:nowrap;color:#262626;font-size:18px">6</div>
<div style="left:0px;top:467px;width:36px;height:1px;background:#c4c4c4"></div>
<div style="left:0px;top:468px;width:36px;height:30px;line-height:30px;text-align:center;white-space:nowrap;color:#262626;font-size:18px">7</div>
<div style="left:0px;top:497px;width:36px;height:1px;background:#c4c4c4"></div>
<div style="left:0px;top:498px;width:36px;height:30px;line-height:30px;text-align:center;white-space:nowrap;color:#262626;font-size:18px">8</div>
<div style="left:0px;top:527px;width:36px;height:1px;background:#c4c4c4"></div>
<div style="left:0px;top:528px;width:36px;height:30px;line-height:30px;text-align:center;white-space:nowrap;color:#262626;font-size:18px">9</div>
<div style="left:0px;top:557px;width:36px;height:1px;background:#c4c4c4"></div>
<div style="left:0px;top:558px;width:36px;height:30px;line-height:30px;text-align:center;white-space:nowrap;color:#262626;font-size:18px">10</div>
<div style="left:0px;top:587px;width:36px;height:1px;background:#c4c4c4"></div>
<div style="left:0px;top:588px;width:36px;height:30px;line-height:30px;text-align:center;white-space:nowrap;color:#262626;font-size:18px">11</div>
<div style="left:0px;top:617px;width:36px;height:1px;background:#c4c4c4"></div>
<div style="left:0px;top:618px;width:36px;height:30px;line-height:30px;text-align:center;white-space:nowrap;color:#262626;font-size:18px">12</div>
<div style="left:0px;top:647px;width:36px;height:1px;background:#c4c4c4"></div>
<div style="left:0px;top:648px;width:36px;height:30px;line-height:30px;text-align:center;white-space:nowrap;color:#262626;font-size:18px">13</div>
<div style="left:0px;top:677px;width:36px;height:1px;background:#c4c4c4"></div>
<div style="left:0px;top:678px;width:36px;height:30px;line-height:30px;text-align:center;white-space:nowrap;color:#262626;font-size:18px">14</div>
<div style="left:0px;top:707px;width:36px;height:1px;background:#c4c4c4"></div>
<div style="left:0px;top:708px;width:36px;height:30px;line-height:30px;text-align:center;white-space:nowrap;color:#262626;font-size:18px">15</div>
<div style="left:0px;top:737px;width:36px;height:1px;background:#c4c4c4"></div>
<div style="left:0px;top:738px;width:36px;height:30px;line-height:30px;text-align:center;white-space:nowrap;color:#262626;font-size:18px">16</div>
<div style="left:0px;top:767px;width:36px;height:1px;background:#c4c4c4"></div>
<div style="left:0px;top:768px;width:36px;height:30px;line-height:30px;text-align:center;white-space:nowrap;color:#262626;font-size:18px">17</div>
<div style="left:0px;top:797px;width:36px;height:1px;background:#c4c4c4"></div>
<div style="left:0px;top:798px;width:36px;height:30px;line-height:30px;text-align:center;white-space:nowrap;color:#262626;font-size:18px">18</div>
<div style="left:0px;top:827px;width:36px;height:1px;background:#c4c4c4"></div>
<div style="left:0px;top:828px;width:36px;height:30px;line-height:30px;text-align:center;white-space:nowrap;color:#262626;font-size:18px">19</div>
<div style="left:0px;top:857px;width:36px;height:1px;background:#c4c4c4"></div>
<div style="left:0px;top:858px;width:36px;height:30px;line-height:30px;text-align:center;white-space:nowrap;color:#262626;font-size:18px">20</div>
<div style="left:0px;top:887px;width:36px;height:1px;background:#c4c4c4"></div>
<div style="left:0px;top:888px;width:36px;height:30px;line-height:30px;text-align:center;white-space:nowrap;color:#262626;font-size:18px">21</div>
<div style="left:0px;top:917px;width:36px;height:1px;background:#c4c4c4"></div>
<div style="left:0px;top:918px;width:36px;height:30px;line-height:30px;text-align:center;white-space:nowrap;color:#262626;font-size:18px">22</div>
<div style="left:0px;top:947px;width:36px;height:1px;background:#c4c4c4"></div>
<div style="left:0px;top:948px;width:36px;height:30px;line-height:30px;text-align:center;white-space:nowrap;color:#262626;font-size:18px">23</div>
<div style="left:141px;top:288px;width:1px;height:687px;background:#dadcdd"></div>
<div style="left:229px;top:288px;width:1px;height:687px;background:#dadcdd"></div>
<div style="left:317px;top:288px;width:1px;height:687px;background:#dadcdd"></div>
<div style="left:405px;top:288px;width:1px;height:687px;background:#dadcdd"></div>
<div style="left:499px;top:288px;width:1px;height:687px;background:#dadcdd"></div>
<div style="left:585px;top:288px;width:1px;height:687px;background:#dadcdd"></div>
<div style="left:671px;top:288px;width:1px;height:687px;background:#dadcdd"></div>
<div style="left:797px;top:288px;width:1px;height:687px;background:#dadcdd"></div>
<div style="left:874px;top:288px;width:1px;height:687px;background:#dadcdd"></div>
<div style="left:936px;top:288px;width:1px;height:687px;background:#dadcdd"></div>
<div style="left:1053px;top:288px;width:1px;height:687px;background:#dadcdd"></div>
<div style="left:1133px;top:288px;width:1px;height:687px;background:#dadcdd"></div>
<div style="left:1209px;top:288px;width:1px;height:687px;background:#dadcdd"></div>
<div style="left:1284px;top:288px;width:1px;height:687px;background:#dadcdd"></div>
<div style="left:1358px;top:288px;width:1px;height:687px;background:#dadcdd"></div>
<div style="left:1432px;top:288px;width:1px;height:687px;background:#dadcdd"></div>
<div style="left:1506px;top:288px;width:1px;height:687px;background:#dadcdd"></div>
<div style="left:1578px;top:288px;width:1px;height:687px;background:#dadcdd"></div>
<div style="left:1644px;top:288px;width:1px;height:687px;background:#dadcdd"></div>
<div style="left:1738px;top:288px;width:1px;height:687px;background:#dadcdd"></div>
<div style="left:1826px;top:288px;width:1px;height:687px;background:#dadcdd"></div>
<div style="left:37px;top:317px;width:1857px;height:1px;background:#dadcdd"></div>
<div style="left:37px;top:347px;width:1857px;height:1px;background:#dadcdd"></div>
<div style="left:37px;top:377px;width:1857px;height:1px;background:#dadcdd"></div>
<div style="left:37px;top:407px;width:1857px;height:1px;background:#dadcdd"></div>
<div style="left:37px;top:437px;width:1857px;height:1px;background:#dadcdd"></div>
<div style="left:37px;top:467px;width:1857px;height:1px;background:#dadcdd"></div>
<div style="left:37px;top:497px;width:1857px;height:1px;background:#dadcdd"></div>
<div style="left:37px;top:527px;width:1857px;height:1px;background:#dadcdd"></div>
<div style="left:37px;top:557px;width:1857px;height:1px;background:#dadcdd"></div>
<div style="left:37px;top:587px;width:1857px;height:1px;background:#dadcdd"></div>
<div style="left:37px;top:617px;width:1857px;height:1px;background:#dadcdd"></div>
<div style="left:37px;top:647px;width:1857px;height:1px;background:#dadcdd"></div>
<div style="left:37px;top:677px;width:1857px;height:1px;background:#dadcdd"></div>
<div style="left:37px;top:707px;width:1857px;height:1px;background:#dadcdd"></div>
<div style="left:37px;top:737px;width:1857px;height:1px;background:#dadcdd"></div>
<div style="left:37px;top:767px;width:1857px;height:1px;background:#dadcdd"></div>
<div style="left:37px;top:797px;width:1857px;height:1px;background:#dadcdd"></div>
<div style="left:37px;top:827px;width:1857px;height:1px;background:#dadcdd"></div>
<div style="left:37px;top:857px;width:1857px;height:1px;background:#dadcdd"></div>
<div style="left:37px;top:887px;width:1857px;height:1px;background:#dadcdd"></div>
<div style="left:37px;top:917px;width:1857px;height:1px;background:#dadcdd"></div>
<div style="left:37px;top:947px;width:1857px;height:1px;background:#dadcdd"></div>
<div style="left:1894px;top:287px;width:1px;height:689px;background:#9b9b9b"></div>
<div style="left:36px;top:975px;width:1859px;height:1px;background:#9b9b9b"></div>
<div style="left:797px;top:288px;width:78px;height:31px;background:#ffc7ce"></div>
<div style="left:1209px;top:288px;width:76px;height:31px;background:#c6efce"></div>
<div style="left:1358px;top:288px;width:75px;height:31px;background:#c6efce"></div>
<div style="left:1506px;top:288px;width:73px;height:31px;background:#c6efce"></div>
<div style="left:1644px;top:288px;width:95px;height:31px;background:#c6efce"></div>
<div style="left:36px;top:287px;width:106px;height:30px;line-height:30px;text-align:center;white-space:nowrap;color:#000;font-size:18px;">本日</div>
<div style="left:141px;top:287px;width:89px;height:30px;line-height:30px;text-align:center;white-space:nowrap;color:#000;font-size:18px;">始値</div>
<div style="left:229px;top:287px;width:89px;height:30px;line-height:30px;text-align:center;white-space:nowrap;color:#000;font-size:18px;">高値</div>
<div style="left:317px;top:287px;width:89px;height:30px;line-height:30px;text-align:center;white-space:nowrap;color:#000;font-size:18px;">安値</div>
<div style="left:405px;top:287px;width:95px;height:30px;line-height:30px;text-align:center;white-space:nowrap;color:#000;font-size:18px;">終値</div>
<div style="left:499px;top:287px;width:87px;height:30px;line-height:30px;text-align:center;white-space:nowrap;color:#000;font-size:18px;">前日比</div>
<div style="left:585px;top:287px;width:87px;height:30px;line-height:30px;text-align:center;white-space:nowrap;color:#000;font-size:18px;">前日比%</div>
<div style="left:671px;top:287px;width:127px;height:30px;line-height:30px;text-align:center;white-space:nowrap;color:#000;font-size:18px;">売買高(株)</div>
<div style="left:797px;top:287px;width:78px;height:30px;line-height:30px;text-align:center;white-space:nowrap;color:#9c0006;font-size:18px;">陽線陰線</div>
<div style="left:874px;top:287px;width:63px;height:30px;line-height:30px;text-align:center;white-space:nowrap;color:#000;font-size:18px;">連続数</div>
<div style="left:936px;top:287px;width:118px;height:30px;line-height:30px;text-align:center;white-space:nowrap;color:#000;font-size:18px;">終値前日比較</div>
<div style="left:1053px;top:287px;width:81px;height:30px;line-height:30px;text-align:center;white-space:nowrap;color:#000;font-size:18px;">上幅下幅</div>
<div style="left:1136px;top:287px;width:200px;height:30px;line-height:30px;text-align:left;white-space:nowrap;color:#000;font-size:18px;">5日比較</div>
<div style="left:1287px;top:287px;width:200px;height:30px;line-height:30px;text-align:left;white-space:nowrap;color:#000;font-size:18px;">25日比較</div>
<div style="left:1435px;top:287px;width:200px;height:30px;line-height:30px;text-align:left;white-space:nowrap;color:#000;font-size:18px;">60日比</div>
<div style="left:1582px;top:287px;width:62px;height:30px;line-height:30px;text-align:left;white-space:nowrap;color:#111;font-size:18px;overflow:hidden">トレンド</div>
<div style="left:1648px;top:287px;width:94px;height:30px;line-height:30px;text-align:left;white-space:nowrap;color:#006100;font-size:18px;">空売り比率</div>
<div style="left:37px;top:318px;width:106px;height:30px;line-height:30px;text-align:center;white-space:nowrap;color:#111;font-size:18px;-webkit-text-stroke:0.2px #fff;letter-spacing:1px">2021/7/12</div>
<div style="left:141px;top:318px;width:89px;height:30px;line-height:30px;text-align:center;white-space:nowrap;color:#111;font-size:18px;-webkit-text-stroke:0.2px #fff;">28,412.70</div>
<div style="left:229px;top:318px;width:89px;height:30px;line-height:30px;text-align:center;white-space:nowrap;color:#111;font-size:18px;-webkit-text-stroke:0.2px #fff;">28,595.12</div>
<div style="left:317px;top:318px;width:89px;height:30px;line-height:30px;text-align:center;white-space:nowrap;color:#111;font-size:18px;-webkit-text-stroke:0.2px #fff;">28,405.60</div>
<div style="left:405px;top:318px;width:95px;height:30px;line-height:30px;text-align:center;white-space:nowrap;color:#111;font-size:18px;-webkit-text-stroke:0.2px #fff;">28,569.02</div>
<div style="left:499px;top:317px;width:87px;height:31px;background:#fababc"></div>
<div style="left:499px;top:318px;width:87px;height:30px;line-height:30px;text-align:center;white-space:nowrap;color:#111;font-size:18px;-webkit-text-stroke:0.2px #fababc;">628.6</div>
<div style="left:585px;top:317px;width:87px;height:31px;background:#fbd1d4"></div>
<div style="left:585px;top:318px;width:87px;height:30px;line-height:30px;text-align:center;white-space:nowrap;color:#111;font-size:18px;-webkit-text-stroke:0.2px #fbd1d4;">2.2</div>
<div style="left:671px;top:318px;width:127px;height:30px;line-height:30px;text-align:center;white-space:nowrap;color:#111;font-size:18px;-webkit-text-stroke:0.2px #fff;">914,716,700</div>
<div style="left:797px;top:317px;width:78px;height:31px;background:#ffc7ce"></div>
<div style="left:797px;top:318px;width:78px;height:30px;line-height:30px;text-align:center;white-space:nowrap;color:#9c0006;font-size:18px;">陽</div>
<div style="left:874px;top:318px;width:63px;height:30px;line-height:30px;text-align:center;white-space:nowrap;color:#111;font-size:18px;-webkit-text-stroke:0.2px #fff;">2</div>
<div style="left:936px;top:318px;width:115px;height:30px;line-height:30px;text-align:right;white-space:nowrap;color:#111;font-size:18px;-webkit-text-stroke:0.2px #fff;">450.99</div>
<div style="left:1133px;top:318px;width:74px;height:30px;line-height:30px;text-align:right;white-space:nowrap;color:#111;font-size:18px;-webkit-text-stroke:0.2px #fff;">28326</div>
<div style="left:1209px;top:317px;width:76px;height:31px;background:#ffc7ce"></div>
<div style="left:1209px;top:318px;width:73px;height:30px;line-height:30px;text-align:right;white-space:nowrap;color:#9c0006;font-size:18px;-webkit-text-stroke:0.2px #ffc7ce;">1.0086</div>
<div style="left:1284px;top:318px;width:72px;height:30px;line-height:30px;text-align:right;white-space:nowrap;color:#111;font-size:18px;-webkit-text-stroke:0.2px #fff;">28788</div>
<div style="left:1358px;top:317px;width:75px;height:31px;background:#c6efce"></div>
<div style="left:1358px;top:318px;width:72px;height:30px;line-height:30px;text-align:right;white-space:nowrap;color:#006100;font-size:18px;-webkit-text-stroke:0.2px #c6efce;">0.9924</div>
<div style="left:1432px;top:318px;width:72px;height:30px;line-height:30px;text-align:right;white-space:nowrap;color:#111;font-size:18px;-webkit-text-stroke:0.2px #fff;">28804</div>
<div style="left:1506px;top:317px;width:73px;height:31px;background:#c6efce"></div>
<div style="left:1506px;top:318px;width:70px;height:30px;line-height:30px;text-align:right;white-space:nowrap;color:#006100;font-size:18px;-webkit-text-stroke:0.2px #c6efce;">0.9919</div>
<div style="left:1578px;top:317px;width:67px;height:31px;background:#70ad47"></div>
<div style="left:1582px;top:318px;width:62px;height:30px;line-height:30px;text-align:left;white-space:nowrap;color:#111;font-size:18px;overflow:hidden">下降</div>
<div style="left:1644px;top:317px;width:95px;height:31px;background:#c6efce"></div>
<div style="left:1644px;top:318px;width:92px;height:30px;line-height:30px;text-align:right;white-space:nowrap;color:#006100;font-size:18px;-webkit-text-stroke:0.2px #c6efce;">40.7</div>
<svg style="left:1285px;top:318px" width="8" height="8"><path d="M0 0 h7 l-7 7 z" fill="#008000"/></svg>
<svg style="left:1433px;top:318px" width="8" height="8"><path d="M0 0 h7 l-7 7 z" fill="#008000"/></svg>
<div style="left:37px;top:348px;width:106px;height:30px;line-height:30px;text-align:center;white-space:nowrap;color:#111;font-size:18px;-webkit-text-stroke:0.2px #fff;letter-spacing:1px">2021/7/9</div>
<div style="left:141px;top:348px;width:89px;height:30px;line-height:30px;text-align:center;white-space:nowrap;color:#111;font-size:18px;-webkit-text-stroke:0.2px #fff;">27,739.42</div>
<div style="left:229px;top:348px;width:89px;height:30px;line-height:30px;text-align:center;white-space:nowrap;color:#111;font-size:18px;-webkit-text-stroke:0.2px #fff;">28,000.02</div>
<div style="left:317px;top:348px;width:89px;height:30px;line-height:30px;text-align:center;white-space:nowrap;color:#111;font-size:18px;-webkit-text-stroke:0.2px #fff;">27,419.40</div>
<div style="left:405px;top:348px;width:95px;height:30px;line-height:30px;text-align:center;white-space:nowrap;color:#111;font-size:18px;-webkit-text-stroke:0.2px #fff;">27,940.42</div>
<div style="left:499px;top:347px;width:87px;height:31px;background:#e5f3eb"></div>
<div style="left:499px;top:348px;width:87px;height:30px;line-height:30px;text-align:center;white-space:nowrap;color:#111;font-size:18px;-webkit-text-stroke:0.2px #e5f3eb;">-177.61</div>
<div style="left:585px;top:347px;width:87px;height:31px;background:#edf6f2"></div>
<div style="left:585px;top:348px;width:87px;height:30px;line-height:30px;text-align:center;white-space:nowrap;color:#111;font-size:18px;-webkit-text-stroke:0.2px #edf6f2;">-0.6</div>
<div style="left:671px;top:348px;width:127px;height:30px;line-height:30px;text-align:center;white-space:nowrap;color:#111;font-size:18px;-webkit-text-stroke:0.2px #fff;">1,186,727,600</div>
<div style="left:797px;top:347px;width:78px;height:31px;background:#ffc7ce"></div>
<div style="left:797px;top:348px;width:78px;height:30px;line-height:30px;text-align:center;white-space:nowrap;color:#9c0006;font-size:18px;">陽</div>
<div style="left:874px;top:348px;width:63px;height:30px;line-height:30px;text-align:center;white-space:nowrap;color:#111;font-size:18px;-webkit-text-stroke:0.2px #fff;">1</div>
<div style="left:936px;top:348px;width:115px;height:30px;line-height:30px;text-align:right;white-space:nowrap;color:#111;font-size:18px;-webkit-text-stroke:0.2px #fff;">-177.61</div>
<div style="left:1133px;top:348px;width:74px;height:30px;line-height:30px;text-align:right;white-space:nowrap;color:#111;font-size:18px;-webkit-text-stroke:0.2px #fff;">28332</div>
<div style="left:1209px;top:347px;width:76px;height:31px;background:#c6efce"></div>
<div style="left:1209px;top:348px;width:73px;height:30px;line-height:30px;text-align:right;white-space:nowrap;color:#006100;font-size:18px;-webkit-text-stroke:0.2px #c6efce;">0.9862</div>
<div style="left:1284px;top:348px;width:72px;height:30px;line-height:30px;text-align:right;white-space:nowrap;color:#111;font-size:18px;-webkit-text-stroke:0.2px #fff;">28806</div>
<div style="left:1358px;top:347px;width:75px;height:31px;background:#c6efce"></div>
<div style="left:1358px;top:348px;width:72px;height:30px;line-height:30px;text-align:right;white-space:nowrap;color:#006100;font-size:18px;-webkit-text-stroke:0.2px #c6efce;">0.97</div>
<div style="left:1432px;top:348px;width:72px;height:30px;line-height:30px;text-align:right;white-space:nowrap;color:#111;font-size:18px;-webkit-text-stroke:0.2px #fff;">28823</div>
<div style="left:1506px;top:347px;width:73px;height:31px;background:#c6efce"></div>
<div style="left:1506px;top:348px;width:70px;height:30px;line-height:30px;text-align:right;white-space:nowrap;color:#006100;font-size:18px;-webkit-text-stroke:0.2px #c6efce;">0.9694</div>
<div style="left:1578px;top:347px;width:67px;height:31px;background:#70ad47"></div>
<div style="left:1582px;top:348px;width:62px;height:30px;line-height:30px;text-align:left;white-space:nowrap;color:#111;font-size:18px;overflow:hidden">下降</div>
<div style="left:1644px;top:347px;width:95px;height:31px;background:#c6efce"></div>
<div style="left:1644px;top:348px;width:92px;height:30px;line-height:30px;text-align:right;white-space:nowrap;color:#006100;font-size:18px;-webkit-text-stroke:0.2px #c6efce;">50.4</div>
<svg style="left:1285px;top:348px" width="8" height="8"><path d="M0 0 h7 l-7 7 z" fill="#008000"/></svg>
<svg style="left:1433px;top:348px" width="8" height="8"><path d="M0 0 h7 l-7 7 z" fill="#008000"/></svg>
<div style="left:37px;top:378px;width:106px;height:30px;line-height:30px;text-align:center;white-space:nowrap;color:#111;font-size:18px;-webkit-text-stroke:0.2px #fff;letter-spacing:1px">2021/7/8</div>
<div style="left:141px;top:378px;width:89px;height:30px;line-height:30px;text-align:center;white-space:nowrap;color:#111;font-size:18px;-webkit-text-stroke:0.2px #fff;">28,332.63</div>
<div style="left:229px;top:378px;width:89px;height:30px;line-height:30px;text-align:center;white-space:nowrap;color:#111;font-size:18px;-webkit-text-stroke:0.2px #fff;">28,366.76</div>
<div style="left:317px;top:378px;width:89px;height:30px;line-height:30px;text-align:center;white-space:nowrap;color:#111;font-size:18px;-webkit-text-stroke:0.2px #fff;">28,118.03</div>
<div style="left:405px;top:378px;width:95px;height:30px;line-height:30px;text-align:center;white-space:nowrap;color:#111;font-size:18px;-webkit-text-stroke:0.2px #fff;">28,118.03</div>
<div style="left:499px;top:377px;width:87px;height:31px;background:#dbefe3"></div>
<div style="left:499px;top:378px;width:87px;height:30px;line-height:30px;text-align:center;white-space:nowrap;color:#111;font-size:18px;-webkit-text-stroke:0.2px #dbefe3;">-248.92</div>
<div style="left:585px;top:377px;width:87px;height:31px;background:#e5f3ec"></div>
<div style="left:585px;top:378px;width:87px;height:30px;line-height:30px;text-align:center;white-space:nowrap;color:#111;font-size:18px;-webkit-text-stroke:0.2px #e5f3ec;">-0.9</div>
<div style="left:671px;top:378px;width:127px;height:30px;line-height:30px;text-align:center;white-space:nowrap;color:#111;font-size:18px;-webkit-text-stroke:0.2px #fff;">923,350,600</div>
<div style="left:797px;top:377px;width:78px;height:31px;background:#c6efce"></div>
<div style="left:797px;top:378px;width:78px;height:30px;line-height:30px;text-align:center;white-space:nowrap;color:#006100;font-size:18px;">陰</div>
<div style="left:874px;top:378px;width:63px;height:30px;line-height:30px;text-align:center;white-space:nowrap;color:#111;font-size:18px;-webkit-text-stroke:0.2px #fff;">1</div>
<div style="left:936px;top:378px;width:115px;height:30px;line-height:30px;text-align:right;white-space:nowrap;color:#111;font-size:18px;-webkit-text-stroke:0.2px #fff;">-248.92</div>
<div style="left:1133px;top:378px;width:74px;height:30px;line-height:30px;text-align:right;white-space:nowrap;color:#111;font-size:18px;-webkit-text-stroke:0.2px #fff;">28500</div>
<div style="left:1209px;top:377px;width:76px;height:31px;background:#c6efce"></div>
<div style="left:1209px;top:378px;width:73px;height:30px;line-height:30px;text-align:right;white-space:nowrap;color:#006100;font-size:18px;-webkit-text-stroke:0.2px #c6efce;">0.9866</div>
<div style="left:1284px;top:378px;width:72px;height:30px;line-height:30px;text-align:right;white-space:nowrap;color:#111;font-size:18px;-webkit-text-stroke:0.2px #fff;">28846</div>
<div style="left:1358px;top:377px;width:75px;height:31px;background:#c6efce"></div>
<div style="left:1358px;top:378px;width:72px;height:30px;line-height:30px;text-align:right;white-space:nowrap;color:#006100;font-size:18px;-webkit-text-stroke:0.2px #c6efce;">0.9748</div>
<div style="left:1432px;top:378px;width:72px;height:30px;line-height:30px;text-align:right;white-space:nowrap;color:#111;font-size:18px;-webkit-text-stroke:0.2px #fff;">28850</div>
<div style="left:1506px;top:377px;width:73px;height:31px;background:#c6efce"></div>
<div style="left:1506px;top:378px;width:70px;height:30px;line-height:30px;text-align:right;white-space:nowrap;color:#006100;font-size:18px;-webkit-text-stroke:0.2px #c6efce;">0.9746</div>
<div style="left:1578px;top:377px;width:67px;height:31px;background:#70ad47"></div>
<div style="left:1582px;top:378px;width:62px;height:30px;line-height:30px;text-align:left;white-space:nowrap;color:#111;font-size:18px;overflow:hidden">下降</div>
<div style="left:1644px;top:377px;width:95px;height:31px;background:#c6efce"></div>
<div style="left:1644px;top:378px;width:92px;height:30px;line-height:30px;text-align:right;white-space:nowrap;color:#006100;font-size:18px;-webkit-text-stroke:0.2px #c6efce;">48.7</div>
<svg style="left:1285px;top:378px" width="8" height="8"><path d="M0 0 h7 l-7 7 z" fill="#008000"/></svg>
<svg style="left:1433px;top:378px" width="8" height="8"><path d="M0 0 h7 l-7 7 z" fill="#008000"/></svg>
<div style="left:37px;top:408px;width:106px;height:30px;line-height:30px;text-align:center;white-space:nowrap;color:#111;font-size:18px;-webkit-text-stroke:0.2px #fff;letter-spacing:1px">2021/7/7</div>
<div style="left:141px;top:408px;width:89px;height:30px;line-height:30px;text-align:center;white-space:nowrap;color:#111;font-size:18px;-webkit-text-stroke:0.2px #fff;">28,262.40</div>
<div style="left:229px;top:408px;width:89px;height:30px;line-height:30px;text-align:center;white-space:nowrap;color:#111;font-size:18px;-webkit-text-stroke:0.2px #fff;">28,434.99</div>
<div style="left:317px;top:408px;width:89px;height:30px;line-height:30px;text-align:center;white-space:nowrap;color:#111;font-size:18px;-webkit-text-stroke:0.2px #fff;">28,161.75</div>
<div style="left:405px;top:408px;width:95px;height:30px;line-height:30px;text-align:center;white-space:nowrap;color:#111;font-size:18px;-webkit-text-stroke:0.2px #fff;">28,358.83</div>
<div style="left:499px;top:407px;width:87px;height:31px;background:#d6eddf"></div>
<div style="left:499px;top:408px;width:87px;height:30px;line-height:30px;text-align:center;white-space:nowrap;color:#111;font-size:18px;-webkit-text-stroke:0.2px #d6eddf;">-284.38</div>
<div style="left:585px;top:407px;width:87px;height:31px;background:#e3f2e9"></div>
<div style="left:585px;top:408px;width:87px;height:30px;line-height:30px;text-align:center;white-space:nowrap;color:#111;font-size:18px;-webkit-text-stroke:0.2px #e3f2e9;">-1</div>
<div style="left:671px;top:408px;width:127px;height:30px;line-height:30px;text-align:center;white-space:nowrap;color:#111;font-size:18px;-webkit-text-stroke:0.2px #fff;">930,151,800</div>
<div style="left:797px;top:407px;width:78px;height:31px;background:#ffc7ce"></div>
<div style="left:797px;top:408px;width:78px;height:30px;line-height:30px;text-align:center;white-space:nowrap;color:#9c0006;font-size:18px;">陽</div>
<div style="left:874px;top:408px;width:63px;height:30px;line-height:30px;text-align:center;white-space:nowrap;color:#111;font-size:18px;-webkit-text-stroke:0.2px #fff;">1</div>
<div style="left:936px;top:408px;width:115px;height:30px;line-height:30px;text-align:right;white-space:nowrap;color:#111;font-size:18px;-webkit-text-stroke:0.2px #fff;">-284.38</div>
<div style="left:1133px;top:408px;width:74px;height:30px;line-height:30px;text-align:right;white-space:nowrap;color:#111;font-size:18px;-webkit-text-stroke:0.2px #fff;">28618</div>
<div style="left:1209px;top:407px;width:76px;height:31px;background:#c6efce"></div>
<div style="left:1209px;top:408px;width:73px;height:30px;line-height:30px;text-align:right;white-space:nowrap;color:#006100;font-size:18px;-webkit-text-stroke:0.2px #c6efce;">0.9909</div>
<div style="left:1284px;top:408px;width:72px;height:30px;line-height:30px;text-align:right;white-space:nowrap;color:#111;font-size:18px;-webkit-text-stroke:0.2px #fff;">28883</div>
<div style="left:1358px;top:407px;width:75px;height:31px;background:#c6efce"></div>
<div style="left:1358px;top:408px;width:72px;height:30px;line-height:30px;text-align:right;white-space:nowrap;color:#006100;font-size:18px;-webkit-text-stroke:0.2px #c6efce;">0.9818</div>
<div style="left:1432px;top:408px;width:72px;height:30px;line-height:30px;text-align:right;white-space:nowrap;color:#111;font-size:18px;-webkit-text-stroke:0.2px #fff;">28877</div>
<div style="left:1506px;top:407px;width:73px;height:31px;background:#c6efce"></div>
<div style="left:1506px;top:408px;width:70px;height:30px;line-height:30px;text-align:right;white-space:nowrap;color:#006100;font-size:18px;-webkit-text-stroke:0.2px #c6efce;">0.982</div>
<div style="left:1644px;top:407px;width:95px;height:31px;background:#c6efce"></div>
<div style="left:1644px;top:408px;width:92px;height:30px;line-height:30px;text-align:right;white-space:nowrap;color:#006100;font-size:18px;-webkit-text-stroke:0.2px #c6efce;">47.6</div>
<svg style="left:1285px;top:408px" width="8" height="8"><path d="M0 0 h7 l-7 7 z" fill="#008000"/></svg>
<svg style="left:1433px;top:408px" width="8" height="8"><path d="M0 0 h7 l-7 7 z" fill="#008000"/></svg>
<div style="left:37px;top:438px;width:106px;height:30px;line-height:30px;text-align:center;white-space:nowrap;color:#111;font-size:18px;-webkit-text-stroke:0.2px #fff;letter-spacing:1px">2021/7/6</div>
<div style="left:141px;top:438px;width:89px;height:30px;line-height:30px;text-align:center;white-space:nowrap;color:#111;font-size:18px;-webkit-text-stroke:0.2px #fff;">28,677.95</div>
<div style="left:229px;top:438px;width:89px;height:30px;line-height:30px;text-align:center;white-space:nowrap;color:#111;font-size:18px;-webkit-text-stroke:0.2px #fff;">28,748.23</div>
<div style="left:317px;top:438px;width:89px;height:30px;line-height:30px;text-align:center;white-space:nowrap;color:#111;font-size:18px;-webkit-text-stroke:0.2px #fff;">28,587.61</div>
<div style="left:405px;top:438px;width:95px;height:30px;line-height:30px;text-align:center;white-space:nowrap;color:#111;font-size:18px;-webkit-text-stroke:0.2px #fff;">28,643.21</div>
<div style="left:499px;top:437px;width:87px;height:31px;background:#fcf7fa"></div>
<div style="left:499px;top:438px;width:87px;height:30px;line-height:30px;text-align:center;white-space:nowrap;color:#111;font-size:18px;-webkit-text-stroke:0.2px #fcf7fa;">45.02</div>
<div style="left:585px;top:437px;width:87px;height:31px;background:#fcf8fb"></div>
<div style="left:585px;top:438px;width:87px;height:30px;line-height:30px;text-align:center;white-space:nowrap;color:#111;font-size:18px;-webkit-text-stroke:0.2px #fcf8fb;">0.2</div>
<div style="left:671px;top:438px;width:127px;height:30px;line-height:30px;text-align:center;white-space:nowrap;color:#111;font-size:18px;-webkit-text-stroke:0.2px #fff;">703,544,900</div>
<div style="left:797px;top:437px;width:78px;height:31px;background:#c6efce"></div>
<div style="left:797px;top:438px;width:78px;height:30px;line-height:30px;text-align:center;white-space:nowrap;color:#006100;font-size:18px;">陰</div>
<div style="left:874px;top:438px;width:63px;height:30px;line-height:30px;text-align:center;white-space:nowrap;color:#111;font-size:18px;-webkit-text-stroke:0.2px #fff;">2</div>
<div style="left:936px;top:438px;width:115px;height:30px;line-height:30px;text-align:right;white-space:nowrap;color:#111;font-size:18px;-webkit-text-stroke:0.2px #fff;">-140.07</div>
<div style="left:1133px;top:438px;width:74px;height:30px;line-height:30px;text-align:right;white-space:nowrap;color:#111;font-size:18px;-webkit-text-stroke:0.2px #fff;">28705</div>
<div style="left:1209px;top:437px;width:76px;height:31px;background:#c6efce"></div>
<div style="left:1209px;top:438px;width:73px;height:30px;line-height:30px;text-align:right;white-space:nowrap;color:#006100;font-size:18px;-webkit-text-stroke:0.2px #c6efce;">0.9979</div>
<div style="left:1284px;top:438px;width:72px;height:30px;line-height:30px;text-align:right;white-space:nowrap;color:#111;font-size:18px;-webkit-text-stroke:0.2px #fff;">28907</div>
<div style="left:1358px;top:437px;width:75px;height:31px;background:#c6efce"></div>
<div style="left:1358px;top:438px;width:72px;height:30px;line-height:30px;text-align:right;white-space:nowrap;color:#006100;font-size:18px;-webkit-text-stroke:0.2px #c6efce;">0.9909</div>
<div style="left:1432px;top:438px;width:72px;height:30px;line-height:30px;text-align:right;white-space:nowrap;color:#111;font-size:18px;-webkit-text-stroke:0.2px #fff;">28900</div>
<div style="left:1506px;top:437px;width:73px;height:31px;background:#c6efce"></div>
<div style="left:1506px;top:438px;width:70px;height:30px;line-height:30px;text-align:right;white-space:nowrap;color:#006100;font-size:18px;-webkit-text-stroke:0.2px #c6efce;">0.9911</div>
<div style="left:1644px;top:437px;width:95px;height:31px;background:#ffc7ce"></div>
<div style="left:1644px;top:438px;width:92px;height:30px;line-height:30px;text-align:right;white-space:nowrap;color:#9c0006;font-size:18px;-webkit-text-stroke:0.2px #ffc7ce;">39.6</div>
<svg style="left:1285px;top:438px" width="8" height="8"><path d="M0 0 h7 l-7 7 z" fill="#008000"/></svg>
<svg style="left:1433px;top:438px" width="8" height="8"><path d="M0 0 h7 l-7 7 z" fill="#008000"/></svg>
<div style="left:37px;top:468px;width:106px;height:30px;line-height:30px;text-align:center;white-space:nowrap;color:#111;font-size:18px;-webkit-text-stroke:0.2px #fff;letter-spacing:1px">2021/7/5</div>
<div style="left:141px;top:468px;width:89px;height:30px;line-height:30px;text-align:center;white-space:nowrap;color:#111;font-size:18px;-webkit-text-stroke:0.2px #fff;">28,709.57</div>
<div style="left:229px;top:468px;width:89px;height:30px;line-height:30px;text-align:center;white-space:nowrap;color:#111;font-size:18px;-webkit-text-stroke:0.2px #fff;">28,731.07</div>
<div style="left:317px;top:468px;width:89px;height:30px;line-height:30px;text-align:center;white-space:nowrap;color:#111;font-size:18px;-webkit-text-stroke:0.2px #fff;">28,581.08</div>
<div style="left:405px;top:468px;width:95px;height:30px;line-height:30px;text-align:center;white-space:nowrap;color:#111;font-size:18px;-webkit-text-stroke:0.2px #fff;">28,598.19</div>
<div style="left:499px;top:467px;width:87px;height:31px;background:#e4f2ea"></div>
<div style="left:499px;top:468px;width:87px;height:30px;line-height:30px;text-align:center;white-space:nowrap;color:#111;font-size:18px;-webkit-text-stroke:0.2px #e4f2ea;">-185.09</div>
<div style="left:585px;top:467px;width:87px;height:31px;background:#edf6f2"></div>
<div style="left:585px;top:468px;width:87px;height:30px;line-height:30px;text-align:center;white-space:nowrap;color:#111;font-size:18px;-webkit-text-stroke:0.2px #edf6f2;">-0.6</div>
<div style="left:671px;top:468px;width:127px;height:30px;line-height:30px;text-align:center;white-space:nowrap;color:#111;font-size:18px;-webkit-text-stroke:0.2px #fff;">689,780,200</div>
<div style="left:797px;top:467px;width:78px;height:31px;background:#c6efce"></div>
<div style="left:797px;top:468px;width:78px;height:30px;line-height:30px;text-align:center;white-space:nowrap;color:#006100;font-size:18px;">陰</div>
<div style="left:874px;top:468px;width:63px;height:30px;line-height:30px;text-align:center;white-space:nowrap;color:#111;font-size:18px;-webkit-text-stroke:0.2px #fff;">1</div>
<div style="left:936px;top:468px;width:115px;height:30px;line-height:30px;text-align:right;white-space:nowrap;color:#111;font-size:18px;-webkit-text-stroke:0.2px #fff;">-185.09</div>
<div style="left:1133px;top:468px;width:74px;height:30px;line-height:30px;text-align:right;white-space:nowrap;color:#111;font-size:18px;-webkit-text-stroke:0.2px #fff;">28739</div>
<div style="left:1209px;top:467px;width:76px;height:31px;background:#c6efce"></div>
<div style="left:1209px;top:468px;width:73px;height:30px;line-height:30px;text-align:right;white-space:nowrap;color:#006100;font-size:18px;-webkit-text-stroke:0.2px #c6efce;">0.9951</div>
<div style="left:1284px;top:468px;width:72px;height:30px;line-height:30px;text-align:right;white-space:nowrap;color:#111;font-size:18px;-webkit-text-stroke:0.2px #fff;">28914</div>
<div style="left:1358px;top:467px;width:75px;height:31px;background:#c6efce"></div>
<div style="left:1358px;top:468px;width:72px;height:30px;line-height:30px;text-align:right;white-space:nowrap;color:#006100;font-size:18px;-webkit-text-stroke:0.2px #c6efce;">0.9891</div>
<div style="left:1432px;top:468px;width:72px;height:30px;line-height:30px;text-align:right;white-space:nowrap;color:#111;font-size:18px;-webkit-text-stroke:0.2px #fff;">28918</div>
<div style="left:1506px;top:467px;width:73px;height:31px;background:#c6efce"></div>
<div style="left:1506px;top:468px;width:70px;height:30px;line-height:30px;text-align:right;white-space:nowrap;color:#006100;font-size:18px;-webkit-text-stroke:0.2px #c6efce;">0.9889</div>
<div style="left:1578px;top:467px;width:67px;height:31px;background:#70ad47"></div>
<div style="left:1582px;top:468px;width:62px;height:30px;line-height:30px;text-align:left;white-space:nowrap;color:#111;font-size:18px;overflow:hidden">下降</div>
<div style="left:1644px;top:467px;width:95px;height:31px;background:#c6efce"></div>
<div style="left:1644px;top:468px;width:92px;height:30px;line-height:30px;text-align:right;white-space:nowrap;color:#006100;font-size:18px;-webkit-text-stroke:0.2px #c6efce;">45.1</div>
<svg style="left:1285px;top:468px" width="8" height="8"><path d="M0 0 h7 l-7 7 z" fill="#008000"/></svg>
<svg style="left:1433px;top:468px" width="8" height="8"><path d="M0 0 h7 l-7 7 z" fill="#008000"/></svg>
<div style="left:37px;top:498px;width:106px;height:30px;line-height:30px;text-align:center;white-space:nowrap;color:#111;font-size:18px;-webkit-text-stroke:0.2px #fff;letter-spacing:1px">2021/7/2</div>
<div style="left:141px;top:498px;width:89px;height:30px;line-height:30px;text-align:center;white-space:nowrap;color:#111;font-size:18px;-webkit-text-stroke:0.2px #fff;">28,719.24</div>
<div style="left:229px;top:498px;width:89px;height:30px;line-height:30px;text-align:center;white-space:nowrap;color:#111;font-size:18px;-webkit-text-stroke:0.2px #fff;">28,849.32</div>
<div style="left:317px;top:498px;width:89px;height:30px;line-height:30px;text-align:center;white-space:nowrap;color:#111;font-size:18px;-webkit-text-stroke:0.2px #fff;">28,688.63</div>
<div style="left:405px;top:498px;width:95px;height:30px;line-height:30px;text-align:center;white-space:nowrap;color:#111;font-size:18px;-webkit-text-stroke:0.2px #fff;">28,783.28</div>
<div style="left:499px;top:497px;width:87px;height:31px;background:#fcf4f7"></div>
<div style="left:499px;top:498px;width:87px;height:30px;line-height:30px;text-align:center;white-space:nowrap;color:#111;font-size:18px;-webkit-text-stroke:0.2px #fcf4f7;">76.24</div>
<div style="left:585px;top:497px;width:87px;height:31px;background:#fcf6f9"></div>
<div style="left:585px;top:498px;width:87px;height:30px;line-height:30px;text-align:center;white-space:nowrap;color:#111;font-size:18px;-webkit-text-stroke:0.2px #fcf6f9;">0.3</div>
<div style="left:671px;top:498px;width:127px;height:30px;line-height:30px;text-align:center;white-space:nowrap;color:#111;font-size:18px;-webkit-text-stroke:0.2px #fff;">904,550,000</div>
<div style="left:797px;top:497px;width:78px;height:31px;background:#ffc7ce"></div>
<div style="left:797px;top:498px;width:78px;height:30px;line-height:30px;text-align:center;white-space:nowrap;color:#9c0006;font-size:18px;">陽</div>
<div style="left:874px;top:498px;width:63px;height:30px;line-height:30px;text-align:center;white-space:nowrap;color:#111;font-size:18px;-webkit-text-stroke:0.2px #fff;">1</div>
<div style="left:936px;top:498px;width:115px;height:30px;line-height:30px;text-align:right;white-space:nowrap;color:#111;font-size:18px;-webkit-text-stroke:0.2px #fff;">76.24</div>
<div style="left:1133px;top:498px;width:74px;height:30px;line-height:30px;text-align:right;white-space:nowrap;color:#111;font-size:18px;-webkit-text-stroke:0.2px #fff;">28828</div>
<div style="left:1209px;top:497px;width:76px;height:31px;background:#c6efce"></div>
<div style="left:1209px;top:498px;width:73px;height:30px;line-height:30px;text-align:right;white-space:nowrap;color:#006100;font-size:18px;-webkit-text-stroke:0.2px #c6efce;">0.9984</div>
<div style="left:1284px;top:498px;width:72px;height:30px;line-height:30px;text-align:right;white-space:nowrap;color:#111;font-size:18px;-webkit-text-stroke:0.2px #fff;">28924</div>
<div style="left:1358px;top:497px;width:75px;height:31px;background:#c6efce"></div>
<div style="left:1358px;top:498px;width:72px;height:30px;line-height:30px;text-align:right;white-space:nowrap;color:#006100;font-size:18px;-webkit-text-stroke:0.2px #c6efce;">0.9951</div>
<div style="left:1432px;top:498px;width:72px;height:30px;line-height:30px;text-align:right;white-space:nowrap;color:#111;font-size:18px;-webkit-text-stroke:0.2px #fff;">28936</div>
<div style="left:1506px;top:497px;width:73px;height:31px;background:#c6efce"></div>
<div style="left:1506px;top:498px;width:70px;height:30px;line-height:30px;text-align:right;white-space:nowrap;color:#006100;font-size:18px;-webkit-text-stroke:0.2px #c6efce;">0.9947</div>
<div style="left:1578px;top:497px;width:67px;height:31px;background:#70ad47"></div>
<div style="left:1582px;top:498px;width:62px;height:30px;line-height:30px;text-align:left;white-space:nowrap;color:#111;font-size:18px;overflow:hidden">下降</div>
<div style="left:1644px;top:497px;width:95px;height:31px;background:#c6efce"></div>
<div style="left:1644px;top:498px;width:92px;height:30px;line-height:30px;text-align:right;white-space:nowrap;color:#006100;font-size:18px;-webkit-text-stroke:0.2px #c6efce;">41</div>
<svg style="left:1285px;top:498px" width="8" height="8"><path d="M0 0 h7 l-7 7 z" fill="#008000"/></svg>
<svg style="left:1433px;top:498px" width="8" height="8"><path d="M0 0 h7 l-7 7 z" fill="#008000"/></svg>
<div style="left:37px;top:528px;width:106px;height:30px;line-height:30px;text-align:center;white-space:nowrap;color:#111;font-size:18px;-webkit-text-stroke:0.2px #fff;letter-spacing:1px">2021/7/1</div>
<div style="left:141px;top:528px;width:89px;height:30px;line-height:30px;text-align:center;white-space:nowrap;color:#111;font-size:18px;-webkit-text-stroke:0.2px #fff;">28,832.41</div>
<div style="left:229px;top:528px;width:89px;height:30px;line-height:30px;text-align:center;white-space:nowrap;color:#111;font-size:18px;-webkit-text-stroke:0.2px #fff;">28,833.17</div>
<div style="left:317px;top:528px;width:89px;height:30px;line-height:30px;text-align:center;white-space:nowrap;color:#111;font-size:18px;-webkit-text-stroke:0.2px #fff;">28,624.80</div>
<div style="left:405px;top:528px;width:95px;height:30px;line-height:30px;text-align:center;white-space:nowrap;color:#111;font-size:18px;-webkit-text-stroke:0.2px #fff;">28,707.04</div>
<div style="left:499px;top:527px;width:87px;height:31px;background:#f1f7f5"></div>
<div style="left:499px;top:528px;width:87px;height:30px;line-height:30px;text-align:center;white-space:nowrap;color:#111;font-size:18px;-webkit-text-stroke:0.2px #f1f7f5;">-84.49</div>
<div style="left:585px;top:527px;width:87px;height:31px;background:#f4f9f9"></div>
<div style="left:585px;top:528px;width:87px;height:30px;line-height:30px;text-align:center;white-space:nowrap;color:#111;font-size:18px;-webkit-text-stroke:0.2px #f4f9f9;">-0.3</div>
<div style="left:671px;top:528px;width:127px;height:30px;line-height:30px;text-align:center;white-space:nowrap;color:#111;font-size:18px;-webkit-text-stroke:0.2px #fff;">706,797,900</div>
<div style="left:797px;top:527px;width:78px;height:31px;background:#c6efce"></div>
<div style="left:797px;top:528px;width:78px;height:30px;line-height:30px;text-align:center;white-space:nowrap;color:#006100;font-size:18px;">陰</div>
<div style="left:874px;top:527px;width:63px;height:31px;background:#5b9bd5"></div>
<div style="left:874px;top:528px;width:63px;height:30px;line-height:30px;text-align:center;white-space:nowrap;color:#111;font-size:18px;-webkit-text-stroke:0.2px #5b9bd5;">5</div>
<div style="left:936px;top:528px;width:115px;height:30px;line-height:30px;text-align:right;white-space:nowrap;color:#111;font-size:18px;-webkit-text-stroke:0.2px #fff;">-168.19</div>
<div style="left:1133px;top:528px;width:74px;height:30px;line-height:30px;text-align:right;white-space:nowrap;color:#111;font-size:18px;-webkit-text-stroke:0.2px #fff;">28885</div>
<div style="left:1209px;top:527px;width:76px;height:31px;background:#c6efce"></div>
<div style="left:1209px;top:528px;width:73px;height:30px;line-height:30px;text-align:right;white-space:nowrap;color:#006100;font-size:18px;-webkit-text-stroke:0.2px #c6efce;">0.9938</div>
<div style="left:1284px;top:528px;width:72px;height:30px;line-height:30px;text-align:right;white-space:nowrap;color:#111;font-size:18px;-webkit-text-stroke:0.2px #fff;">28939</div>
<div style="left:1358px;top:527px;width:75px;height:31px;background:#c6efce"></div>
<div style="left:1358px;top:528px;width:72px;height:30px;line-height:30px;text-align:right;white-space:nowrap;color:#006100;font-size:18px;-webkit-text-stroke:0.2px #c6efce;">0.992</div>
<div style="left:1432px;top:528px;width:72px;height:30px;line-height:30px;text-align:right;white-space:nowrap;color:#111;font-size:18px;-webkit-text-stroke:0.2px #fff;">28958</div>
<div style="left:1506px;top:527px;width:73px;height:31px;background:#c6efce"></div>
<div style="left:1506px;top:528px;width:70px;height:30px;line-height:30px;text-align:right;white-space:nowrap;color:#006100;font-size:18px;-webkit-text-stroke:0.2px #c6efce;">0.9913</div>
<div style="left:1578px;top:527px;width:67px;height:31px;background:#70ad47"></div>
<div style="left:1582px;top:528px;width:62px;height:30px;line-height:30px;text-align:left;white-space:nowrap;color:#111;font-size:18px;overflow:hidden">下降</div>
<div style="left:1644px;top:527px;width:95px;height:31px;background:#c6efce"></div>
<div style="left:1644px;top:528px;width:92px;height:30px;line-height:30px;text-align:right;white-space:nowrap;color:#006100;font-size:18px;-webkit-text-stroke:0.2px #c6efce;">42.1</div>
<svg style="left:1285px;top:528px" width="8" height="8"><path d="M0 0 h7 l-7 7 z" fill="#008000"/></svg>
<svg style="left:1433px;top:528px" width="8" height="8"><path d="M0 0 h7 l-7 7 z" fill="#008000"/></svg>
<div style="left:37px;top:558px;width:106px;height:30px;line-height:30px;text-align:center;white-space:nowrap;color:#111;font-size:18px;-webkit-text-stroke:0.2px #fff;letter-spacing:1px">2021/6/30</div>
<div style="left:141px;top:558px;width:89px;height:30px;line-height:30px;text-align:center;white-space:nowrap;color:#111;font-size:18px;-webkit-text-stroke:0.2px #fff;">28,896.31</div>
<div style="left:229px;top:558px;width:89px;height:30px;line-height:30px;text-align:center;white-space:nowrap;color:#111;font-size:18px;-webkit-text-stroke:0.2px #fff;">28,998.99</div>
<div style="left:317px;top:558px;width:89px;height:30px;line-height:30px;text-align:center;white-space:nowrap;color:#111;font-size:18px;-webkit-text-stroke:0.2px #fff;">28,779.76</div>
<div style="left:405px;top:558px;width:95px;height:30px;line-height:30px;text-align:center;white-space:nowrap;color:#111;font-size:18px;-webkit-text-stroke:0.2px #fff;">28,791.53</div>
<div style="left:499px;top:557px;width:87px;height:31px;background:#f9fbfd"></div>
<div style="left:499px;top:558px;width:87px;height:30px;line-height:30px;text-align:center;white-space:nowrap;color:#111;font-size:18px;-webkit-text-stroke:0.2px #f9fbfd;">-21.08</div>
<div style="left:585px;top:557px;width:87px;height:31px;background:#f9fbfd"></div>
<div style="left:585px;top:558px;width:87px;height:30px;line-height:30px;text-align:center;white-space:nowrap;color:#111;font-size:18px;-webkit-text-stroke:0.2px #f9fbfd;">-0.1</div>
<div style="left:671px;top:558px;width:127px;height:30px;line-height:30px;text-align:center;white-space:nowrap;color:#111;font-size:18px;-webkit-text-stroke:0.2px #fff;">772,484,500</div>
<div style="left:797px;top:557px;width:78px;height:31px;background:#c6efce"></div>
<div style="left:797px;top:558px;width:78px;height:30px;line-height:30px;text-align:center;white-space:nowrap;color:#006100;font-size:18px;">陰</div>
<div style="left:874px;top:557px;width:63px;height:31px;background:#5b9bd5"></div>
<div style="left:874px;top:558px;width:63px;height:30px;line-height:30px;text-align:center;white-space:nowrap;color:#111;font-size:18px;-webkit-text-stroke:0.2px #5b9bd5;">4</div>
<div style="left:936px;top:558px;width:115px;height:30px;line-height:30px;text-align:right;white-space:nowrap;color:#111;font-size:18px;-webkit-text-stroke:0.2px #fff;">-83.7</div>
<div style="left:1133px;top:558px;width:74px;height:30px;line-height:30px;text-align:right;white-space:nowrap;color:#111;font-size:18px;-webkit-text-stroke:0.2px #fff;">28919</div>
<div style="left:1209px;top:557px;width:76px;height:31px;background:#c6efce"></div>
<div style="left:1209px;top:558px;width:73px;height:30px;line-height:30px;text-align:right;white-space:nowrap;color:#006100;font-size:18px;-webkit-text-stroke:0.2px #c6efce;">0.9956</div>
<div style="left:1284px;top:558px;width:72px;height:30px;line-height:30px;text-align:right;white-space:nowrap;color:#111;font-size:18px;-webkit-text-stroke:0.2px #fff;">28932</div>
<div style="left:1358px;top:557px;width:75px;height:31px;background:#c6efce"></div>
<div style="left:1358px;top:558px;width:72px;height:30px;line-height:30px;text-align:right;white-space:nowrap;color:#006100;font-size:18px;-webkit-text-stroke:0.2px #c6efce;">0.9951</div>
<div style="left:1432px;top:558px;width:72px;height:30px;line-height:30px;text-align:right;white-space:nowrap;color:#111;font-size:18px;-webkit-text-stroke:0.2px #fff;">28977</div>
<div style="left:1506px;top:557px;width:73px;height:31px;background:#c6efce"></div>
<div style="left:1506px;top:558px;width:70px;height:30px;line-height:30px;text-align:right;white-space:nowrap;color:#006100;font-size:18px;-webkit-text-stroke:0.2px #c6efce;">0.9936</div>
<div style="left:1578px;top:557px;width:67px;height:31px;background:#70ad47"></div>
<div style="left:1582px;top:558px;width:62px;height:30px;line-height:30px;text-align:left;white-space:nowrap;color:#111;font-size:18px;overflow:hidden">下降</div>
<div style="left:1644px;top:557px;width:95px;height:31px;background:#c6efce"></div>
<div style="left:1644px;top:558px;width:92px;height:30px;line-height:30px;text-align:right;white-space:nowrap;color:#006100;font-size:18px;-webkit-text-stroke:0.2px #c6efce;">40.5</div>
<svg style="left:1285px;top:558px" width="8" height="8"><path d="M0 0 h7 l-7 7 z" fill="#008000"/></svg>
<svg style="left:1433px;top:558px" width="8" height="8"><path d="M0 0 h7 l-7 7 z" fill="#008000"/></svg>
<div style="left:37px;top:588px;width:106px;height:30px;line-height:30px;text-align:center;white-space:nowrap;color:#111;font-size:18px;-webkit-text-stroke:0.2px #fff;letter-spacing:1px">2021/6/29</div>
<div style="left:141px;top:588px;width:89px;height:30px;line-height:30px;text-align:center;white-space:nowrap;color:#111;font-size:18px;-webkit-text-stroke:0.2px #fff;">28,927.44</div>
<div style="left:229px;top:588px;width:89px;height:30px;line-height:30px;text-align:center;white-space:nowrap;color:#111;font-size:18px;-webkit-text-stroke:0.2px #fff;">28,951.68</div>
<div style="left:317px;top:588px;width:89px;height:30px;line-height:30px;text-align:center;white-space:nowrap;color:#111;font-size:18px;-webkit-text-stroke:0.2px #fff;">28,735.55</div>
<div style="left:405px;top:588px;width:95px;height:30px;line-height:30px;text-align:center;white-space:nowrap;color:#111;font-size:18px;-webkit-text-stroke:0.2px #fff;">28,812.61</div>
<div style="left:499px;top:587px;width:87px;height:31px;background:#ddefe4"></div>
<div style="left:499px;top:588px;width:87px;height:30px;line-height:30px;text-align:center;white-space:nowrap;color:#111;font-size:18px;-webkit-text-stroke:0.2px #ddefe4;">-235.41</div>
<div style="left:585px;top:587px;width:87px;height:31px;background:#e8f4ee"></div>
<div style="left:585px;top:588px;width:87px;height:30px;line-height:30px;text-align:center;white-space:nowrap;color:#111;font-size:18px;-webkit-text-stroke:0.2px #e8f4ee;">-0.8</div>
<div style="left:671px;top:588px;width:127px;height:30px;line-height:30px;text-align:center;white-space:nowrap;color:#111;font-size:18px;-webkit-text-stroke:0.2px #fff;">858,246,500</div>
<div style="left:797px;top:587px;width:78px;height:31px;background:#c6efce"></div>
<div style="left:797px;top:588px;width:78px;height:30px;line-height:30px;text-align:center;white-space:nowrap;color:#006100;font-size:18px;">陰</div>
<div style="left:874px;top:587px;width:63px;height:31px;background:#5b9bd5"></div>
<div style="left:874px;top:588px;width:63px;height:30px;line-height:30px;text-align:center;white-space:nowrap;color:#111;font-size:18px;-webkit-text-stroke:0.2px #5b9bd5;">3</div>
<div style="left:936px;top:588px;width:115px;height:30px;line-height:30px;text-align:right;white-space:nowrap;color:#111;font-size:18px;-webkit-text-stroke:0.2px #fff;">-62.62</div>
<div style="left:1133px;top:588px;width:74px;height:30px;line-height:30px;text-align:right;white-space:nowrap;color:#111;font-size:18px;-webkit-text-stroke:0.2px #fff;">28935</div>
<div style="left:1209px;top:587px;width:76px;height:31px;background:#c6efce"></div>
<div style="left:1209px;top:588px;width:73px;height:30px;line-height:30px;text-align:right;white-space:nowrap;color:#006100;font-size:18px;-webkit-text-stroke:0.2px #c6efce;">0.9958</div>
<div style="left:1284px;top:588px;width:72px;height:30px;line-height:30px;text-align:right;white-space:nowrap;color:#111;font-size:18px;-webkit-text-stroke:0.2px #fff;">28926</div>
<div style="left:1358px;top:587px;width:75px;height:31px;background:#c6efce"></div>
<div style="left:1358px;top:588px;width:72px;height:30px;line-height:30px;text-align:right;white-space:nowrap;color:#006100;font-size:18px;-webkit-text-stroke:0.2px #c6efce;">0.9961</div>
<div style="left:1432px;top:588px;width:72px;height:30px;line-height:30px;text-align:right;white-space:nowrap;color:#111;font-size:18px;-webkit-text-stroke:0.2px #fff;">28987</div>
<div style="left:1506px;top:587px;width:73px;height:31px;background:#c6efce"></div>
<div style="left:1506px;top:588px;width:70px;height:30px;line-height:30px;text-align:right;white-space:nowrap;color:#006100;font-size:18px;-webkit-text-stroke:0.2px #c6efce;">0.994</div>
<div style="left:1644px;top:587px;width:95px;height:31px;background:#c6efce"></div>
<div style="left:1644px;top:588px;width:92px;height:30px;line-height:30px;text-align:right;white-space:nowrap;color:#006100;font-size:18px;-webkit-text-stroke:0.2px #c6efce;">44.3</div>
<svg style="left:1285px;top:588px" width="8" height="8"><path d="M0 0 h7 l-7 7 z" fill="#008000"/></svg>
<svg style="left:1433px;top:588px" width="8" height="8"><path d="M0 0 h7 l-7 7 z" fill="#008000"/></svg>
<div style="left:37px;top:618px;width:106px;height:30px;line-height:30px;text-align:center;white-space:nowrap;color:#111;font-size:18px;-webkit-text-stroke:0.2px #fff;letter-spacing:1px">2021/6/28</div>
<div style="left:141px;top:618px;width:89px;height:30px;line-height:30px;text-align:center;white-space:nowrap;color:#111;font-size:18px;-webkit-text-stroke:0.2px #fff;">29,112.66</div>
<div style="left:229px;top:618px;width:89px;height:30px;line-height:30px;text-align:center;white-space:nowrap;color:#111;font-size:18px;-webkit-text-stroke:0.2px #fff;">29,121.28</div>
<div style="left:317px;top:618px;width:89px;height:30px;line-height:30px;text-align:center;white-space:nowrap;color:#111;font-size:18px;-webkit-text-stroke:0.2px #fff;">28,984.93</div>
<div style="left:405px;top:618px;width:95px;height:30px;line-height:30px;text-align:center;white-space:nowrap;color:#111;font-size:18px;-webkit-text-stroke:0.2px #fff;">29,048.02</div>
<div style="left:499px;top:617px;width:87px;height:31px;background:#fafbfd"></div>
<div style="left:499px;top:618px;width:87px;height:30px;line-height:30px;text-align:center;white-space:nowrap;color:#111;font-size:18px;-webkit-text-stroke:0.2px #fafbfd;">-18.16</div>
<div style="left:585px;top:617px;width:87px;height:31px;background:#f9fbfd"></div>
<div style="left:585px;top:618px;width:87px;height:30px;line-height:30px;text-align:center;white-space:nowrap;color:#111;font-size:18px;-webkit-text-stroke:0.2px #f9fbfd;">-0.1</div>
<div style="left:671px;top:618px;width:127px;height:30px;line-height:30px;text-align:center;white-space:nowrap;color:#111;font-size:18px;-webkit-text-stroke:0.2px #fff;">734,988,100</div>
<div style="left:797px;top:617px;width:78px;height:31px;background:#c6efce"></div>
<div style="left:797px;top:618px;width:78px;height:30px;line-height:30px;text-align:center;white-space:nowrap;color:#006100;font-size:18px;">陰</div>
<div style="left:874px;top:617px;width:63px;height:31px;background:#5b9bd5"></div>
<div style="left:874px;top:618px;width:63px;height:30px;line-height:30px;text-align:center;white-space:nowrap;color:#111;font-size:18px;-webkit-text-stroke:0.2px #5b9bd5;">2</div>
<div style="left:936px;top:618px;width:115px;height:30px;line-height:30px;text-align:right;white-space:nowrap;color:#111;font-size:18px;-webkit-text-stroke:0.2px #fff;">172.79</div>
<div style="left:1133px;top:618px;width:74px;height:30px;line-height:30px;text-align:right;white-space:nowrap;color:#111;font-size:18px;-webkit-text-stroke:0.2px #fff;">28950</div>
<div style="left:1209px;top:617px;width:76px;height:31px;background:#ffc7ce"></div>
<div style="left:1209px;top:618px;width:73px;height:30px;line-height:30px;text-align:right;white-space:nowrap;color:#9c0006;font-size:18px;-webkit-text-stroke:0.2px #ffc7ce;">1.0034</div>
<div style="left:1284px;top:618px;width:72px;height:30px;line-height:30px;text-align:right;white-space:nowrap;color:#111;font-size:18px;-webkit-text-stroke:0.2px #fff;">28916</div>
<div style="left:1358px;top:617px;width:75px;height:31px;background:#ffc7ce"></div>
<div style="left:1358px;top:618px;width:72px;height:30px;line-height:30px;text-align:right;white-space:nowrap;color:#9c0006;font-size:18px;-webkit-text-stroke:0.2px #ffc7ce;">1.0046</div>
<div style="left:1432px;top:618px;width:72px;height:30px;line-height:30px;text-align:right;white-space:nowrap;color:#111;font-size:18px;-webkit-text-stroke:0.2px #fff;">28993</div>
<div style="left:1506px;top:617px;width:73px;height:31px;background:#ffc7ce"></div>
<div style="left:1506px;top:618px;width:70px;height:30px;line-height:30px;text-align:right;white-space:nowrap;color:#9c0006;font-size:18px;-webkit-text-stroke:0.2px #ffc7ce;">1.0019</div>
<div style="left:1644px;top:617px;width:95px;height:31px;background:#c6efce"></div>
<div style="left:1644px;top:618px;width:92px;height:30px;line-height:30px;text-align:right;white-space:nowrap;color:#006100;font-size:18px;-webkit-text-stroke:0.2px #c6efce;">41.3</div>
<svg style="left:1285px;top:618px" width="8" height="8"><path d="M0 0 h7 l-7 7 z" fill="#008000"/></svg>
<svg style="left:1433px;top:618px" width="8" height="8"><path d="M0 0 h7 l-7 7 z" fill="#008000"/></svg>
<div style="left:37px;top:648px;width:106px;height:30px;line-height:30px;text-align:center;white-space:nowrap;color:#111;font-size:18px;-webkit-text-stroke:0.2px #fff;letter-spacing:1px">2021/6/25</div>
<div style="left:141px;top:648px;width:89px;height:30px;line-height:30px;text-align:center;white-space:nowrap;color:#111;font-size:18px;-webkit-text-stroke:0.2px #fff;">29,137.30</div>
<div style="left:229px;top:648px;width:89px;height:30px;line-height:30px;text-align:center;white-space:nowrap;color:#111;font-size:18px;-webkit-text-stroke:0.2px #fff;">29,174.17</div>
<div style="left:317px;top:648px;width:89px;height:30px;line-height:30px;text-align:center;white-space:nowrap;color:#111;font-size:18px;-webkit-text-stroke:0.2px #fff;">28,992.74</div>
<div style="left:405px;top:648px;width:95px;height:30px;line-height:30px;text-align:center;white-space:nowrap;color:#111;font-size:18px;-webkit-text-stroke:0.2px #fff;">29,066.18</div>
<div style="left:499px;top:647px;width:87px;height:31px;background:#fbe8eb"></div>
<div style="left:499px;top:648px;width:87px;height:30px;line-height:30px;text-align:center;white-space:nowrap;color:#111;font-size:18px;-webkit-text-stroke:0.2px #fbe8eb;">190.95</div>
<div style="left:585px;top:647px;width:87px;height:31px;background:#fceef1"></div>
<div style="left:585px;top:648px;width:87px;height:30px;line-height:30px;text-align:center;white-space:nowrap;color:#111;font-size:18px;-webkit-text-stroke:0.2px #fceef1;">0.7</div>
<div style="left:671px;top:648px;width:127px;height:30px;line-height:30px;text-align:center;white-space:nowrap;color:#111;font-size:18px;-webkit-text-stroke:0.2px #fff;">761,834,500</div>
<div style="left:797px;top:647px;width:78px;height:31px;background:#c6efce"></div>
<div style="left:797px;top:648px;width:78px;height:30px;line-height:30px;text-align:center;white-space:nowrap;color:#006100;font-size:18px;">陰</div>
<div style="left:874px;top:647px;width:63px;height:31px;background:#5b9bd5"></div>
<div style="left:874px;top:648px;width:63px;height:30px;line-height:30px;text-align:center;white-space:nowrap;color:#111;font-size:18px;-webkit-text-stroke:0.2px #5b9bd5;">1</div>
<div style="left:936px;top:648px;width:115px;height:30px;line-height:30px;text-align:right;white-space:nowrap;color:#111;font-size:18px;-webkit-text-stroke:0.2px #fff;">190.95</div>
<div style="left:1133px;top:648px;width:74px;height:30px;line-height:30px;text-align:right;white-space:nowrap;color:#111;font-size:18px;-webkit-text-stroke:0.2px #fff;">28742</div>
<div style="left:1209px;top:647px;width:76px;height:31px;background:#ffc7ce"></div>
<div style="left:1209px;top:648px;width:73px;height:30px;line-height:30px;text-align:right;white-space:nowrap;color:#9c0006;font-size:18px;-webkit-text-stroke:0.2px #ffc7ce;">1.0113</div>
<div style="left:1284px;top:648px;width:72px;height:30px;line-height:30px;text-align:right;white-space:nowrap;color:#111;font-size:18px;-webkit-text-stroke:0.2px #fff;">28889</div>
<div style="left:1358px;top:647px;width:75px;height:31px;background:#ffc7ce"></div>
<div style="left:1358px;top:648px;width:72px;height:30px;line-height:30px;text-align:right;white-space:nowrap;color:#9c0006;font-size:18px;-webkit-text-stroke:0.2px #ffc7ce;">1.0061</div>
<div style="left:1432px;top:648px;width:72px;height:30px;line-height:30px;text-align:right;white-space:nowrap;color:#111;font-size:18px;-webkit-text-stroke:0.2px #fff;">29000</div>
<div style="left:1506px;top:647px;width:73px;height:31px;background:#ffc7ce"></div>
<div style="left:1506px;top:648px;width:70px;height:30px;line-height:30px;text-align:right;white-space:nowrap;color:#9c0006;font-size:18px;-webkit-text-stroke:0.2px #ffc7ce;">1.0023</div>
<div style="left:1578px;top:647px;width:67px;height:31px;background:#70ad47"></div>
<div style="left:1582px;top:648px;width:62px;height:30px;line-height:30px;text-align:left;white-space:nowrap;color:#111;font-size:18px;overflow:hidden">下降</div>
<div style="left:1644px;top:647px;width:95px;height:31px;background:#ffc7ce"></div>
<div style="left:1644px;top:648px;width:92px;height:30px;line-height:30px;text-align:right;white-space:nowrap;color:#9c0006;font-size:18px;-webkit-text-stroke:0.2px #ffc7ce;">37.3</div>
<svg style="left:1285px;top:648px" width="8" height="8"><path d="M0 0 h7 l-7 7 z" fill="#008000"/></svg>
<svg style="left:1433px;top:648px" width="8" height="8"><path d="M0 0 h7 l-7 7 z" fill="#008000"/></svg>
<div style="left:37px;top:678px;width:106px;height:30px;line-height:30px;text-align:center;white-space:nowrap;color:#111;font-size:18px;-webkit-text-stroke:0.2px #fff;letter-spacing:1px">2021/6/24</div>
<div style="left:141px;top:678px;width:89px;height:30px;line-height:30px;text-align:center;white-space:nowrap;color:#111;font-size:18px;-webkit-text-stroke:0.2px #fff;">28,811.82</div>
<div style="left:229px;top:678px;width:89px;height:30px;line-height:30px;text-align:center;white-space:nowrap;color:#111;font-size:18px;-webkit-text-stroke:0.2px #fff;">28,935.34</div>
<div style="left:317px;top:678px;width:89px;height:30px;line-height:30px;text-align:center;white-space:nowrap;color:#111;font-size:18px;-webkit-text-stroke:0.2px #fff;">28,758.37</div>
<div style="left:405px;top:678px;width:95px;height:30px;line-height:30px;text-align:center;white-space:nowrap;color:#111;font-size:18px;-webkit-text-stroke:0.2px #fff;">28,875.23</div>
<div style="left:499px;top:677px;width:87px;height:31px;background:#fcfcff"></div>
<div style="left:499px;top:678px;width:87px;height:30px;line-height:30px;text-align:center;white-space:nowrap;color:#111;font-size:18px;-webkit-text-stroke:0.2px #fcfcff;">0.34</div>
<div style="left:585px;top:677px;width:87px;height:31px;background:#fcfcff"></div>
<div style="left:585px;top:678px;width:87px;height:30px;line-height:30px;text-align:center;white-space:nowrap;color:#111;font-size:18px;-webkit-text-stroke:0.2px #fcfcff;">0</div>
<div style="left:671px;top:678px;width:127px;height:30px;line-height:30px;text-align:center;white-space:nowrap;color:#111;font-size:18px;-webkit-text-stroke:0.2px #fff;">746,189,300</div>
<div style="left:797px;top:677px;width:78px;height:31px;background:#ffc7ce"></div>
<div style="left:797px;top:678px;width:78px;height:30px;line-height:30px;text-align:center;white-space:nowrap;color:#9c0006;font-size:18px;">陽</div>
<div style="left:874px;top:678px;width:63px;height:30px;line-height:30px;text-align:center;white-space:nowrap;color:#111;font-size:18px;-webkit-text-stroke:0.2px #fff;">1</div>
<div style="left:936px;top:678px;width:115px;height:30px;line-height:30px;text-align:right;white-space:nowrap;color:#111;font-size:18px;-webkit-text-stroke:0.2px #fff;">0.34</div>
<div style="left:1133px;top:678px;width:74px;height:30px;line-height:30px;text-align:right;white-space:nowrap;color:#111;font-size:18px;-webkit-text-stroke:0.2px #fff;">28722</div>
<div style="left:1209px;top:677px;width:76px;height:31px;background:#ffc7ce"></div>
<div style="left:1209px;top:678px;width:73px;height:30px;line-height:30px;text-align:right;white-space:nowrap;color:#9c0006;font-size:18px;-webkit-text-stroke:0.2px #ffc7ce;">1.0053</div>
<div style="left:1284px;top:678px;width:72px;height:30px;line-height:30px;text-align:right;white-space:nowrap;color:#111;font-size:18px;-webkit-text-stroke:0.2px #fff;">28859</div>
<div style="left:1358px;top:677px;width:75px;height:31px;background:#ffc7ce"></div>
<div style="left:1358px;top:678px;width:72px;height:30px;line-height:30px;text-align:right;white-space:nowrap;color:#9c0006;font-size:18px;-webkit-text-stroke:0.2px #ffc7ce;">1.0006</div>
<div style="left:1432px;top:678px;width:72px;height:30px;line-height:30px;text-align:right;white-space:nowrap;color:#111;font-size:18px;-webkit-text-stroke:0.2px #fff;">29005</div>
<div style="left:1506px;top:677px;width:73px;height:31px;background:#c6efce"></div>
<div style="left:1506px;top:678px;width:70px;height:30px;line-height:30px;text-align:right;white-space:nowrap;color:#006100;font-size:18px;-webkit-text-stroke:0.2px #c6efce;">0.9955</div>
<div style="left:1578px;top:677px;width:67px;height:31px;background:#70ad47"></div>
<div style="left:1582px;top:678px;width:62px;height:30px;line-height:30px;text-align:left;white-space:nowrap;color:#111;font-size:18px;overflow:hidden">下降</div>
<div style="left:1644px;top:677px;width:95px;height:31px;background:#ffc7ce"></div>
<div style="left:1644px;top:678px;width:92px;height:30px;line-height:30px;text-align:right;white-space:nowrap;color:#9c0006;font-size:18px;-webkit-text-stroke:0.2px #ffc7ce;">39.9</div>
<svg style="left:1285px;top:678px" width="8" height="8"><path d="M0 0 h7 l-7 7 z" fill="#008000"/></svg>
<svg style="left:1433px;top:678px" width="8" height="8"><path d="M0 0 h7 l-7 7 z" fill="#008000"/></svg>
<div style="left:37px;top:708px;width:106px;height:30px;line-height:30px;text-align:center;white-space:nowrap;color:#111;font-size:18px;-webkit-text-stroke:0.2px #fff;letter-spacing:1px">2021/6/23</div>
<div style="left:141px;top:708px;width:89px;height:30px;line-height:30px;text-align:center;white-space:nowrap;color:#111;font-size:18px;-webkit-text-stroke:0.2px #fff;">28,886.92</div>
<div style="left:229px;top:708px;width:89px;height:30px;line-height:30px;text-align:center;white-space:nowrap;color:#111;font-size:18px;-webkit-text-stroke:0.2px #fff;">29,007.83</div>
<div style="left:317px;top:708px;width:89px;height:30px;line-height:30px;text-align:center;white-space:nowrap;color:#111;font-size:18px;-webkit-text-stroke:0.2px #fff;">28,860.06</div>
<div style="left:405px;top:708px;width:95px;height:30px;line-height:30px;text-align:center;white-space:nowrap;color:#111;font-size:18px;-webkit-text-stroke:0.2px #fff;">28,874.89</div>
<div style="left:499px;top:707px;width:87px;height:31px;background:#fbfcfe"></div>
<div style="left:499px;top:708px;width:87px;height:30px;line-height:30px;text-align:center;white-space:nowrap;color:#111;font-size:18px;-webkit-text-stroke:0.2px #fbfcfe;">-9.24</div>
<div style="left:585px;top:707px;width:87px;height:31px;background:#fcfcff"></div>
<div style="left:585px;top:708px;width:87px;height:30px;line-height:30px;text-align:center;white-space:nowrap;color:#111;font-size:18px;-webkit-text-stroke:0.2px #fcfcff;">0</div>
<div style="left:671px;top:708px;width:127px;height:30px;line-height:30px;text-align:center;white-space:nowrap;color:#111;font-size:18px;-webkit-text-stroke:0.2px #fff;">819,130,700</div>
<div style="left:797px;top:707px;width:78px;height:31px;background:#c6efce"></div>
<div style="left:797px;top:708px;width:78px;height:30px;line-height:30px;text-align:center;white-space:nowrap;color:#006100;font-size:18px;">陰</div>
<div style="left:874px;top:708px;width:63px;height:30px;line-height:30px;text-align:center;white-space:nowrap;color:#111;font-size:18px;-webkit-text-stroke:0.2px #fff;">1</div>
<div style="left:936px;top:708px;width:115px;height:30px;line-height:30px;text-align:right;white-space:nowrap;color:#111;font-size:18px;-webkit-text-stroke:0.2px #fff;">-9.24</div>
<div style="left:1133px;top:708px;width:74px;height:30px;line-height:30px;text-align:right;white-space:nowrap;color:#111;font-size:18px;-webkit-text-stroke:0.2px #fff;">28750</div>
<div style="left:1209px;top:707px;width:76px;height:31px;background:#ffc7ce"></div>
<div style="left:1209px;top:708px;width:73px;height:30px;line-height:30px;text-align:right;white-space:nowrap;color:#9c0006;font-size:18px;-webkit-text-stroke:0.2px #ffc7ce;">1.0043</div>
<div style="left:1284px;top:708px;width:72px;height:30px;line-height:30px;text-align:right;white-space:nowrap;color:#111;font-size:18px;-webkit-text-stroke:0.2px #fff;">28828</div>
<div style="left:1358px;top:707px;width:75px;height:31px;background:#ffc7ce"></div>
<div style="left:1358px;top:708px;width:72px;height:30px;line-height:30px;text-align:right;white-space:nowrap;color:#9c0006;font-size:18px;-webkit-text-stroke:0.2px #ffc7ce;">1.0016</div>
<div style="left:1432px;top:708px;width:72px;height:30px;line-height:30px;text-align:right;white-space:nowrap;color:#111;font-size:18px;-webkit-text-stroke:0.2px #fff;">29010</div>
<div style="left:1506px;top:707px;width:73px;height:31px;background:#c6efce"></div>
<div style="left:1506px;top:708px;width:70px;height:30px;line-height:30px;text-align:right;white-space:nowrap;color:#006100;font-size:18px;-webkit-text-stroke:0.2px #c6efce;">0.9953</div>
<div style="left:1578px;top:707px;width:67px;height:31px;background:#70ad47"></div>
<div style="left:1582px;top:708px;width:62px;height:30px;line-height:30px;text-align:left;white-space:nowrap;color:#111;font-size:18px;overflow:hidden">下降</div>
<div style="left:1644px;top:707px;width:95px;height:31px;background:#ffc7ce"></div>
<div style="left:1644px;top:708px;width:92px;height:30px;line-height:30px;text-align:right;white-space:nowrap;color:#9c0006;font-size:18px;-webkit-text-stroke:0.2px #ffc7ce;">38.5</div>
<svg style="left:1285px;top:708px" width="8" height="8"><path d="M0 0 h7 l-7 7 z" fill="#008000"/></svg>
<svg style="left:1433px;top:708px" width="8" height="8"><path d="M0 0 h7 l-7 7 z" fill="#008000"/></svg>
<div style="left:37px;top:738px;width:106px;height:30px;line-height:30px;text-align:center;white-space:nowrap;color:#111;font-size:18px;-webkit-text-stroke:0.2px #fff;letter-spacing:1px">2021/6/22</div>
<div style="left:141px;top:738px;width:89px;height:30px;line-height:30px;text-align:center;white-space:nowrap;color:#111;font-size:18px;-webkit-text-stroke:0.2px #fff;">28,513.07</div>
<div style="left:229px;top:738px;width:89px;height:30px;line-height:30px;text-align:center;white-space:nowrap;color:#111;font-size:18px;-webkit-text-stroke:0.2px #fff;">28,895.26</div>
<div style="left:317px;top:738px;width:89px;height:30px;line-height:30px;text-align:center;white-space:nowrap;color:#111;font-size:18px;-webkit-text-stroke:0.2px #fff;">28,494.46</div>
<div style="left:405px;top:738px;width:95px;height:30px;line-height:30px;text-align:center;white-space:nowrap;color:#111;font-size:18px;-webkit-text-stroke:0.2px #fff;">28,884.13</div>
<div style="left:499px;top:737px;width:87px;height:31px;background:#f9a0a2"></div>
<div style="left:499px;top:738px;width:87px;height:30px;line-height:30px;text-align:center;white-space:nowrap;color:#111;font-size:18px;-webkit-text-stroke:0.2px #f9a0a2;">873.2</div>
<div style="left:585px;top:737px;width:87px;height:31px;background:#fac0c3"></div>
<div style="left:585px;top:738px;width:87px;height:30px;line-height:30px;text-align:center;white-space:nowrap;color:#111;font-size:18px;-webkit-text-stroke:0.2px #fac0c3;">3.1</div>
<div style="left:671px;top:738px;width:127px;height:30px;line-height:30px;text-align:center;white-space:nowrap;color:#111;font-size:18px;-webkit-text-stroke:0.2px #fff;">993,265,400</div>
<div style="left:797px;top:737px;width:78px;height:31px;background:#ffc7ce"></div>
<div style="left:797px;top:738px;width:78px;height:30px;line-height:30px;text-align:center;white-space:nowrap;color:#9c0006;font-size:18px;">陽</div>
<div style="left:874px;top:738px;width:63px;height:30px;line-height:30px;text-align:center;white-space:nowrap;color:#111;font-size:18px;-webkit-text-stroke:0.2px #fff;">1</div>
<div style="left:936px;top:738px;width:115px;height:30px;line-height:30px;text-align:right;white-space:nowrap;color:#111;font-size:18px;-webkit-text-stroke:0.2px #fff;">873.2</div>
<div style="left:1133px;top:738px;width:74px;height:30px;line-height:30px;text-align:right;white-space:nowrap;color:#111;font-size:18px;-webkit-text-stroke:0.2px #fff;">28834</div>
<div style="left:1209px;top:737px;width:76px;height:31px;background:#ffc7ce"></div>
<div style="left:1209px;top:738px;width:73px;height:30px;line-height:30px;text-align:right;white-space:nowrap;color:#9c0006;font-size:18px;-webkit-text-stroke:0.2px #ffc7ce;">1.0017</div>
<div style="left:1284px;top:738px;width:72px;height:30px;line-height:30px;text-align:right;white-space:nowrap;color:#111;font-size:18px;-webkit-text-stroke:0.2px #fff;">28794</div>
<div style="left:1358px;top:737px;width:75px;height:31px;background:#ffc7ce"></div>
<div style="left:1358px;top:738px;width:72px;height:30px;line-height:30px;text-align:right;white-space:nowrap;color:#9c0006;font-size:18px;-webkit-text-stroke:0.2px #ffc7ce;">1.0031</div>
<div style="left:1432px;top:738px;width:72px;height:30px;line-height:30px;text-align:right;white-space:nowrap;color:#111;font-size:18px;-webkit-text-stroke:0.2px #fff;">29008</div>
<div style="left:1506px;top:737px;width:73px;height:31px;background:#c6efce"></div>
<div style="left:1506px;top:738px;width:70px;height:30px;line-height:30px;text-align:right;white-space:nowrap;color:#006100;font-size:18px;-webkit-text-stroke:0.2px #c6efce;">0.9957</div>
<div style="left:1644px;top:737px;width:95px;height:31px;background:#c6efce"></div>
<div style="left:1644px;top:738px;width:92px;height:30px;line-height:30px;text-align:right;white-space:nowrap;color:#006100;font-size:18px;-webkit-text-stroke:0.2px #c6efce;">41.4</div>
<svg style="left:1285px;top:738px" width="8" height="8"><path d="M0 0 h7 l-7 7 z" fill="#008000"/></svg>
<svg style="left:1433px;top:738px" width="8" height="8"><path d="M0 0 h7 l-7 7 z" fill="#008000"/></svg>
<div style="left:37px;top:768px;width:106px;height:30px;line-height:30px;text-align:center;white-space:nowrap;color:#111;font-size:18px;-webkit-text-stroke:0.2px #fff;letter-spacing:1px">2021/6/21</div>
<div style="left:141px;top:768px;width:89px;height:30px;line-height:30px;text-align:center;white-space:nowrap;color:#111;font-size:18px;-webkit-text-stroke:0.2px #fff;">28,506.84</div>
<div style="left:229px;top:768px;width:89px;height:30px;line-height:30px;text-align:center;white-space:nowrap;color:#111;font-size:18px;-webkit-text-stroke:0.2px #fff;">28,506.84</div>
<div style="left:317px;top:768px;width:89px;height:30px;line-height:30px;text-align:center;white-space:nowrap;color:#111;font-size:18px;-webkit-text-stroke:0.2px #fff;">27,795.86</div>
<div style="left:405px;top:768px;width:95px;height:30px;line-height:30px;text-align:center;white-space:nowrap;color:#111;font-size:18px;-webkit-text-stroke:0.2px #fff;">28,010.93</div>
<div style="left:499px;top:767px;width:87px;height:31px;background:#7ec993"></div>
<div style="left:499px;top:768px;width:87px;height:30px;line-height:30px;text-align:center;white-space:nowrap;color:#111;font-size:18px;-webkit-text-stroke:0.2px #7ec993;">-953.15</div>
<div style="left:585px;top:767px;width:87px;height:31px;background:#a9dab8"></div>
<div style="left:585px;top:768px;width:87px;height:30px;line-height:30px;text-align:center;white-space:nowrap;color:#111;font-size:18px;-webkit-text-stroke:0.2px #a9dab8;">-3.3</div>
<div style="left:671px;top:768px;width:127px;height:30px;line-height:30px;text-align:center;white-space:nowrap;color:#111;font-size:18px;-webkit-text-stroke:0.2px #fff;">1,116,451,200</div>
<div style="left:797px;top:767px;width:78px;height:31px;background:#c6efce"></div>
<div style="left:797px;top:768px;width:78px;height:30px;line-height:30px;text-align:center;white-space:nowrap;color:#006100;font-size:18px;">陰</div>
<div style="left:874px;top:767px;width:63px;height:31px;background:#5b9bd5"></div>
<div style="left:874px;top:768px;width:63px;height:30px;line-height:30px;text-align:center;white-space:nowrap;color:#111;font-size:18px;-webkit-text-stroke:0.2px #5b9bd5;">4</div>
<div style="left:936px;top:768px;width:115px;height:30px;line-height:30px;text-align:right;white-space:nowrap;color:#111;font-size:18px;-webkit-text-stroke:0.2px #fff;">-1430.37</div>
<div style="left:1053px;top:767px;width:81px;height:31px;background:#ffeb9c"></div>
<div style="left:1053px;top:768px;width:81px;height:30px;line-height:30px;text-align:center;white-space:nowrap;color:#9c5700;font-size:18px;">千</div>
<div style="left:1133px;top:768px;width:74px;height:30px;line-height:30px;text-align:right;white-space:nowrap;color:#111;font-size:18px;-webkit-text-stroke:0.2px #fff;">28945</div>
<div style="left:1209px;top:767px;width:76px;height:31px;background:#c6efce"></div>
<div style="left:1209px;top:768px;width:73px;height:30px;line-height:30px;text-align:right;white-space:nowrap;color:#006100;font-size:18px;-webkit-text-stroke:0.2px #c6efce;">0.9677</div>
<div style="left:1284px;top:768px;width:72px;height:30px;line-height:30px;text-align:right;white-space:nowrap;color:#111;font-size:18px;-webkit-text-stroke:0.2px #fff;">28775</div>
<div style="left:1358px;top:767px;width:75px;height:31px;background:#c6efce"></div>
<div style="left:1358px;top:768px;width:72px;height:30px;line-height:30px;text-align:right;white-space:nowrap;color:#006100;font-size:18px;-webkit-text-stroke:0.2px #c6efce;">0.9734</div>
<div style="left:1432px;top:768px;width:72px;height:30px;line-height:30px;text-align:right;white-space:nowrap;color:#111;font-size:18px;-webkit-text-stroke:0.2px #fff;">29000</div>
<div style="left:1506px;top:767px;width:73px;height:31px;background:#c6efce"></div>
<div style="left:1506px;top:768px;width:70px;height:30px;line-height:30px;text-align:right;white-space:nowrap;color:#006100;font-size:18px;-webkit-text-stroke:0.2px #c6efce;">0.9659</div>
<div style="left:1644px;top:767px;width:95px;height:31px;background:#c6efce"></div>
<div style="left:1644px;top:768px;width:92px;height:30px;line-height:30px;text-align:right;white-space:nowrap;color:#006100;font-size:18px;-webkit-text-stroke:0.2px #c6efce;">50.2</div>
<svg style="left:1285px;top:768px" width="8" height="8"><path d="M0 0 h7 l-7 7 z" fill="#008000"/></svg>
<svg style="left:1433px;top:768px" width="8" height="8"><path d="M0 0 h7 l-7 7 z" fill="#008000"/></svg>
<div style="left:37px;top:798px;width:106px;height:30px;line-height:30px;text-align:center;white-space:nowrap;color:#111;font-size:18px;-webkit-text-stroke:0.2px #fff;letter-spacing:1px">2021/6/18</div>
<div style="left:141px;top:798px;width:89px;height:30px;line-height:30px;text-align:center;white-space:nowrap;color:#111;font-size:18px;-webkit-text-stroke:0.2px #fff;">29,136.74</div>
<div style="left:229px;top:798px;width:89px;height:30px;line-height:30px;text-align:center;white-space:nowrap;color:#111;font-size:18px;-webkit-text-stroke:0.2px #fff;">29,136.74</div>
<div style="left:317px;top:798px;width:89px;height:30px;line-height:30px;text-align:center;white-space:nowrap;color:#111;font-size:18px;-webkit-text-stroke:0.2px #fff;">28,957.98</div>
<div style="left:405px;top:798px;width:95px;height:30px;line-height:30px;text-align:center;white-space:nowrap;color:#111;font-size:18px;-webkit-text-stroke:0.2px #fff;">28,964.08</div>
<div style="left:499px;top:797px;width:87px;height:31px;background:#f5f9f9"></div>
<div style="left:499px;top:798px;width:87px;height:30px;line-height:30px;text-align:center;white-space:nowrap;color:#111;font-size:18px;-webkit-text-stroke:0.2px #f5f9f9;">-54.25</div>
<div style="left:585px;top:797px;width:87px;height:31px;background:#f7fafb"></div>
<div style="left:585px;top:798px;width:87px;height:30px;line-height:30px;text-align:center;white-space:nowrap;color:#111;font-size:18px;-webkit-text-stroke:0.2px #f7fafb;">-0.2</div>
<div style="left:671px;top:798px;width:127px;height:30px;line-height:30px;text-align:center;white-space:nowrap;color:#111;font-size:18px;-webkit-text-stroke:0.2px #fff;">1,071,606,700</div>
<div style="left:797px;top:797px;width:78px;height:31px;background:#c6efce"></div>
<div style="left:797px;top:798px;width:78px;height:30px;line-height:30px;text-align:center;white-space:nowrap;color:#006100;font-size:18px;">陰</div>
<div style="left:874px;top:797px;width:63px;height:31px;background:#5b9bd5"></div>
<div style="left:874px;top:798px;width:63px;height:30px;line-height:30px;text-align:center;white-space:nowrap;color:#111;font-size:18px;-webkit-text-stroke:0.2px #5b9bd5;">3</div>
<div style="left:936px;top:798px;width:115px;height:30px;line-height:30px;text-align:right;white-space:nowrap;color:#111;font-size:18px;-webkit-text-stroke:0.2px #fff;">-477.22</div>
<div style="left:1133px;top:798px;width:74px;height:30px;line-height:30px;text-align:right;white-space:nowrap;color:#111;font-size:18px;-webkit-text-stroke:0.2px #fff;">29175</div>
<div style="left:1209px;top:797px;width:76px;height:31px;background:#c6efce"></div>
<div style="left:1209px;top:798px;width:73px;height:30px;line-height:30px;text-align:right;white-space:nowrap;color:#006100;font-size:18px;-webkit-text-stroke:0.2px #c6efce;">0.9928</div>
<div style="left:1284px;top:798px;width:72px;height:30px;line-height:30px;text-align:right;white-space:nowrap;color:#111;font-size:18px;-webkit-text-stroke:0.2px #fff;">28768</div>
<div style="left:1358px;top:797px;width:75px;height:31px;background:#ffc7ce"></div>
<div style="left:1358px;top:798px;width:72px;height:30px;line-height:30px;text-align:right;white-space:nowrap;color:#9c0006;font-size:18px;-webkit-text-stroke:0.2px #ffc7ce;">1.0068</div>
<div style="left:1432px;top:798px;width:72px;height:30px;line-height:30px;text-align:right;white-space:nowrap;color:#111;font-size:18px;-webkit-text-stroke:0.2px #fff;">29016</div>
<div style="left:1506px;top:797px;width:73px;height:31px;background:#c6efce"></div>
<div style="left:1506px;top:798px;width:70px;height:30px;line-height:30px;text-align:right;white-space:nowrap;color:#006100;font-size:18px;-webkit-text-stroke:0.2px #c6efce;">0.9982</div>
<div style="left:1644px;top:797px;width:95px;height:31px;background:#ffc7ce"></div>
<div style="left:1644px;top:798px;width:92px;height:30px;line-height:30px;text-align:right;white-space:nowrap;color:#9c0006;font-size:18px;-webkit-text-stroke:0.2px #ffc7ce;">39.2</div>
<svg style="left:1285px;top:798px" width="8" height="8"><path d="M0 0 h7 l-7 7 z" fill="#008000"/></svg>
<svg style="left:1433px;top:798px" width="8" height="8"><path d="M0 0 h7 l-7 7 z" fill="#008000"/></svg>
<div style="left:37px;top:828px;width:106px;height:30px;line-height:30px;text-align:center;white-space:nowrap;color:#111;font-size:18px;-webkit-text-stroke:0.2px #fff;letter-spacing:1px">2021/6/17</div>
<div style="left:141px;top:828px;width:89px;height:30px;line-height:30px;text-align:center;white-space:nowrap;color:#111;font-size:18px;-webkit-text-stroke:0.2px #fff;">29,149.34</div>
<div style="left:229px;top:828px;width:89px;height:30px;line-height:30px;text-align:center;white-space:nowrap;color:#111;font-size:18px;-webkit-text-stroke:0.2px #fff;">29,197.68</div>
<div style="left:317px;top:828px;width:89px;height:30px;line-height:30px;text-align:center;white-space:nowrap;color:#111;font-size:18px;-webkit-text-stroke:0.2px #fff;">28,875.39</div>
<div style="left:405px;top:828px;width:95px;height:30px;line-height:30px;text-align:center;white-space:nowrap;color:#111;font-size:18px;-webkit-text-stroke:0.2px #fff;">29,018.33</div>
<div style="left:499px;top:827px;width:87px;height:31px;background:#d8ede0"></div>
<div style="left:499px;top:828px;width:87px;height:30px;line-height:30px;text-align:center;white-space:nowrap;color:#111;font-size:18px;-webkit-text-stroke:0.2px #d8ede0;">-272.68</div>
<div style="left:585px;top:827px;width:87px;height:31px;background:#e5f3ec"></div>
<div style="left:585px;top:828px;width:87px;height:30px;line-height:30px;text-align:center;white-space:nowrap;color:#111;font-size:18px;-webkit-text-stroke:0.2px #e5f3ec;">-0.9</div>
<div style="left:671px;top:828px;width:127px;height:30px;line-height:30px;text-align:center;white-space:nowrap;color:#111;font-size:18px;-webkit-text-stroke:0.2px #fff;">997,590,500</div>
<div style="left:797px;top:827px;width:78px;height:31px;background:#c6efce"></div>
<div style="left:797px;top:828px;width:78px;height:30px;line-height:30px;text-align:center;white-space:nowrap;color:#006100;font-size:18px;">陰</div>
<div style="left:874px;top:827px;width:63px;height:31px;background:#5b9bd5"></div>
<div style="left:874px;top:828px;width:63px;height:30px;line-height:30px;text-align:center;white-space:nowrap;color:#111;font-size:18px;-webkit-text-stroke:0.2px #5b9bd5;">2</div>
<div style="left:936px;top:828px;width:115px;height:30px;line-height:30px;text-align:right;white-space:nowrap;color:#111;font-size:18px;-webkit-text-stroke:0.2px #fff;">-422.97</div>
<div style="left:1133px;top:828px;width:74px;height:30px;line-height:30px;text-align:right;white-space:nowrap;color:#111;font-size:18px;-webkit-text-stroke:0.2px #fff;">29172</div>
<div style="left:1209px;top:827px;width:76px;height:31px;background:#c6efce"></div>
<div style="left:1209px;top:828px;width:73px;height:30px;line-height:30px;text-align:right;white-space:nowrap;color:#006100;font-size:18px;-webkit-text-stroke:0.2px #c6efce;">0.9947</div>
<div style="left:1284px;top:828px;width:72px;height:30px;line-height:30px;text-align:right;white-space:nowrap;color:#111;font-size:18px;-webkit-text-stroke:0.2px #fff;">28733</div>
<div style="left:1358px;top:827px;width:75px;height:31px;background:#ffc7ce"></div>
<div style="left:1358px;top:828px;width:72px;height:30px;line-height:30px;text-align:right;white-space:nowrap;color:#9c0006;font-size:18px;-webkit-text-stroke:0.2px #ffc7ce;">1.0099</div>
<div style="left:1432px;top:828px;width:72px;height:30px;line-height:30px;text-align:right;white-space:nowrap;color:#111;font-size:18px;-webkit-text-stroke:0.2px #fff;">29020</div>
<div style="left:1506px;top:827px;width:73px;height:31px;background:#c6efce"></div>
<div style="left:1506px;top:828px;width:70px;height:30px;line-height:30px;text-align:right;white-space:nowrap;color:#006100;font-size:18px;-webkit-text-stroke:0.2px #c6efce;">1</div>
<div style="left:1644px;top:827px;width:95px;height:31px;background:#c6efce"></div>
<div style="left:1644px;top:828px;width:92px;height:30px;line-height:30px;text-align:right;white-space:nowrap;color:#006100;font-size:18px;-webkit-text-stroke:0.2px #c6efce;">41.9</div>
<svg style="left:1285px;top:828px" width="8" height="8"><path d="M0 0 h7 l-7 7 z" fill="#008000"/></svg>
<svg style="left:1433px;top:828px" width="8" height="8"><path d="M0 0 h7 l-7 7 z" fill="#008000"/></svg>
<div style="left:37px;top:858px;width:106px;height:30px;line-height:30px;text-align:center;white-space:nowrap;color:#111;font-size:18px;-webkit-text-stroke:0.2px #fff;letter-spacing:1px">2021/6/16</div>
<div style="left:141px;top:858px;width:89px;height:30px;line-height:30px;text-align:center;white-space:nowrap;color:#111;font-size:18px;-webkit-text-stroke:0.2px #fff;">29,306.14</div>
<div style="left:229px;top:858px;width:89px;height:30px;line-height:30px;text-align:center;white-space:nowrap;color:#111;font-size:18px;-webkit-text-stroke:0.2px #fff;">29,434.10</div>
<div style="left:317px;top:858px;width:89px;height:30px;line-height:30px;text-align:center;white-space:nowrap;color:#111;font-size:18px;-webkit-text-stroke:0.2px #fff;">29,263.72</div>
<div style="left:405px;top:858px;width:95px;height:30px;line-height:30px;text-align:center;white-space:nowrap;color:#111;font-size:18px;-webkit-text-stroke:0.2px #fff;">29,291.01</div>
<div style="left:499px;top:857px;width:87px;height:31px;background:#e8f4ee"></div>
<div style="left:499px;top:858px;width:87px;height:30px;line-height:30px;text-align:center;white-space:nowrap;color:#111;font-size:18px;-webkit-text-stroke:0.2px #e8f4ee;">-150.29</div>
<div style="left:585px;top:857px;width:87px;height:31px;background:#eff7f4"></div>
<div style="left:585px;top:858px;width:87px;height:30px;line-height:30px;text-align:center;white-space:nowrap;color:#111;font-size:18px;-webkit-text-stroke:0.2px #eff7f4;">-0.5</div>
<div style="left:671px;top:858px;width:127px;height:30px;line-height:30px;text-align:center;white-space:nowrap;color:#111;font-size:18px;-webkit-text-stroke:0.2px #fff;">764,022,500</div>
<div style="left:797px;top:857px;width:78px;height:31px;background:#c6efce"></div>
<div style="left:797px;top:858px;width:78px;height:30px;line-height:30px;text-align:center;white-space:nowrap;color:#006100;font-size:18px;">陰</div>
<div style="left:874px;top:857px;width:63px;height:31px;background:#5b9bd5"></div>
<div style="left:874px;top:858px;width:63px;height:30px;line-height:30px;text-align:center;white-space:nowrap;color:#111;font-size:18px;-webkit-text-stroke:0.2px #5b9bd5;">1</div>
<div style="left:936px;top:858px;width:115px;height:30px;line-height:30px;text-align:right;white-space:nowrap;color:#111;font-size:18px;-webkit-text-stroke:0.2px #fff;">-150.29</div>
<div style="left:1133px;top:858px;width:74px;height:30px;line-height:30px;text-align:right;white-space:nowrap;color:#111;font-size:18px;-webkit-text-stroke:0.2px #fff;">29160</div>
<div style="left:1209px;top:857px;width:76px;height:31px;background:#ffc7ce"></div>
<div style="left:1209px;top:858px;width:73px;height:30px;line-height:30px;text-align:right;white-space:nowrap;color:#9c0006;font-size:18px;-webkit-text-stroke:0.2px #ffc7ce;">1.0045</div>
<div style="left:1284px;top:858px;width:72px;height:30px;line-height:30px;text-align:right;white-space:nowrap;color:#111;font-size:18px;-webkit-text-stroke:0.2px #fff;">28670</div>
<div style="left:1358px;top:857px;width:75px;height:31px;background:#ffc7ce"></div>
<div style="left:1358px;top:858px;width:72px;height:30px;line-height:30px;text-align:right;white-space:nowrap;color:#9c0006;font-size:18px;-webkit-text-stroke:0.2px #ffc7ce;">1.0217</div>
<div style="left:1432px;top:858px;width:72px;height:30px;line-height:30px;text-align:right;white-space:nowrap;color:#111;font-size:18px;-webkit-text-stroke:0.2px #fff;">29032</div>
<div style="left:1506px;top:857px;width:73px;height:31px;background:#ffc7ce"></div>
<div style="left:1506px;top:858px;width:70px;height:30px;line-height:30px;text-align:right;white-space:nowrap;color:#9c0006;font-size:18px;-webkit-text-stroke:0.2px #ffc7ce;">1.0089</div>
<div style="left:1644px;top:857px;width:95px;height:31px;background:#ffc7ce"></div>
<div style="left:1644px;top:858px;width:92px;height:30px;line-height:30px;text-align:right;white-space:nowrap;color:#9c0006;font-size:18px;-webkit-text-stroke:0.2px #ffc7ce;">38.9</div>
<svg style="left:1285px;top:858px" width="8" height="8"><path d="M0 0 h7 l-7 7 z" fill="#008000"/></svg>
<svg style="left:1433px;top:858px" width="8" height="8"><path d="M0 0 h7 l-7 7 z" fill="#008000"/></svg>
<div style="left:37px;top:888px;width:106px;height:30px;line-height:30px;text-align:center;white-space:nowrap;color:#111;font-size:18px;-webkit-text-stroke:0.2px #fff;letter-spacing:1px">2021/6/15</div>
<div style="left:141px;top:888px;width:89px;height:30px;line-height:30px;text-align:center;white-space:nowrap;color:#111;font-size:18px;-webkit-text-stroke:0.2px #fff;">29,256.03</div>
<div style="left:229px;top:888px;width:89px;height:30px;line-height:30px;text-align:center;white-space:nowrap;color:#111;font-size:18px;-webkit-text-stroke:0.2px #fff;">29,480.85</div>
<div style="left:317px;top:888px;width:89px;height:30px;line-height:30px;text-align:center;white-space:nowrap;color:#111;font-size:18px;-webkit-text-stroke:0.2px #fff;">29,235.71</div>
<div style="left:405px;top:888px;width:95px;height:30px;line-height:30px;text-align:center;white-space:nowrap;color:#111;font-size:18px;-webkit-text-stroke:0.2px #fff;">29,441.30</div>
<div style="left:499px;top:887px;width:87px;height:31px;background:#fbdee1"></div>
<div style="left:499px;top:888px;width:87px;height:30px;line-height:30px;text-align:center;white-space:nowrap;color:#111;font-size:18px;-webkit-text-stroke:0.2px #fbdee1;">279.5</div>
<div style="left:585px;top:887px;width:87px;height:31px;background:#fbe9ec"></div>
<div style="left:585px;top:888px;width:87px;height:30px;line-height:30px;text-align:center;white-space:nowrap;color:#111;font-size:18px;-webkit-text-stroke:0.2px #fbe9ec;">1</div>
<div style="left:671px;top:888px;width:127px;height:30px;line-height:30px;text-align:center;white-space:nowrap;color:#111;font-size:18px;-webkit-text-stroke:0.2px #fff;">807,759,600</div>
<div style="left:797px;top:887px;width:78px;height:31px;background:#ffc7ce"></div>
<div style="left:797px;top:888px;width:78px;height:30px;line-height:30px;text-align:center;white-space:nowrap;color:#9c0006;font-size:18px;">陽</div>
<div style="left:874px;top:888px;width:63px;height:30px;line-height:30px;text-align:center;white-space:nowrap;color:#111;font-size:18px;-webkit-text-stroke:0.2px #fff;">2</div>
<div style="left:936px;top:888px;width:115px;height:30px;line-height:30px;text-align:right;white-space:nowrap;color:#111;font-size:18px;-webkit-text-stroke:0.2px #fff;">492.57</div>
<div style="left:1133px;top:888px;width:74px;height:30px;line-height:30px;text-align:right;white-space:nowrap;color:#111;font-size:18px;-webkit-text-stroke:0.2px #fff;">29074</div>
<div style="left:1209px;top:887px;width:76px;height:31px;background:#ffc7ce"></div>
<div style="left:1209px;top:888px;width:73px;height:30px;line-height:30px;text-align:right;white-space:nowrap;color:#9c0006;font-size:18px;-webkit-text-stroke:0.2px #ffc7ce;">1.0126</div>
<div style="left:1284px;top:888px;width:72px;height:30px;line-height:30px;text-align:right;white-space:nowrap;color:#111;font-size:18px;-webkit-text-stroke:0.2px #fff;">28624</div>
<div style="left:1358px;top:887px;width:75px;height:31px;background:#ffc7ce"></div>
<div style="left:1358px;top:888px;width:72px;height:30px;line-height:30px;text-align:right;white-space:nowrap;color:#9c0006;font-size:18px;-webkit-text-stroke:0.2px #ffc7ce;">1.0285</div>
<div style="left:1432px;top:888px;width:72px;height:30px;line-height:30px;text-align:right;white-space:nowrap;color:#111;font-size:18px;-webkit-text-stroke:0.2px #fff;">29048</div>
<div style="left:1506px;top:887px;width:73px;height:31px;background:#ffc7ce"></div>
<div style="left:1506px;top:888px;width:70px;height:30px;line-height:30px;text-align:right;white-space:nowrap;color:#9c0006;font-size:18px;-webkit-text-stroke:0.2px #ffc7ce;">1.0135</div>
<div style="left:1644px;top:887px;width:95px;height:31px;background:#ffc7ce"></div>
<div style="left:1644px;top:888px;width:92px;height:30px;line-height:30px;text-align:right;white-space:nowrap;color:#9c0006;font-size:18px;-webkit-text-stroke:0.2px #ffc7ce;">38.2</div>
<svg style="left:1285px;top:888px" width="8" height="8"><path d="M0 0 h7 l-7 7 z" fill="#008000"/></svg>
<svg style="left:1433px;top:888px" width="8" height="8"><path d="M0 0 h7 l-7 7 z" fill="#008000"/></svg>
<div style="left:37px;top:918px;width:106px;height:30px;line-height:30px;text-align:center;white-space:nowrap;color:#111;font-size:18px;-webkit-text-stroke:0.2px #fff;letter-spacing:1px">2021/6/14</div>
<div style="left:141px;top:918px;width:89px;height:30px;line-height:30px;text-align:center;white-space:nowrap;color:#111;font-size:18px;-webkit-text-stroke:0.2px #fff;">29,153.11</div>
<div style="left:229px;top:918px;width:89px;height:30px;line-height:30px;text-align:center;white-space:nowrap;color:#111;font-size:18px;-webkit-text-stroke:0.2px #fff;">29,208.35</div>
<div style="left:317px;top:918px;width:89px;height:30px;line-height:30px;text-align:center;white-space:nowrap;color:#111;font-size:18px;-webkit-text-stroke:0.2px #fff;">29,026.27</div>
<div style="left:405px;top:918px;width:95px;height:30px;line-height:30px;text-align:center;white-space:nowrap;color:#111;font-size:18px;-webkit-text-stroke:0.2px #fff;">29,161.80</div>
<div style="left:499px;top:917px;width:87px;height:31px;background:#fbe5e8"></div>
<div style="left:499px;top:918px;width:87px;height:30px;line-height:30px;text-align:center;white-space:nowrap;color:#111;font-size:18px;-webkit-text-stroke:0.2px #fbe5e8;">213.07</div>
<div style="left:585px;top:917px;width:87px;height:31px;background:#fceef1"></div>
<div style="left:585px;top:918px;width:87px;height:30px;line-height:30px;text-align:center;white-space:nowrap;color:#111;font-size:18px;-webkit-text-stroke:0.2px #fceef1;">0.7</div>
<div style="left:671px;top:918px;width:127px;height:30px;line-height:30px;text-align:center;white-space:nowrap;color:#111;font-size:18px;-webkit-text-stroke:0.2px #fff;">854,234,100</div>
<div style="left:797px;top:917px;width:78px;height:31px;background:#ffc7ce"></div>
<div style="left:797px;top:918px;width:78px;height:30px;line-height:30px;text-align:center;white-space:nowrap;color:#9c0006;font-size:18px;">陽</div>
<div style="left:874px;top:918px;width:63px;height:30px;line-height:30px;text-align:center;white-space:nowrap;color:#111;font-size:18px;-webkit-text-stroke:0.2px #fff;">1</div>
<div style="left:936px;top:918px;width:115px;height:30px;line-height:30px;text-align:right;white-space:nowrap;color:#111;font-size:18px;-webkit-text-stroke:0.2px #fff;">213.07</div>
<div style="left:1133px;top:918px;width:74px;height:30px;line-height:30px;text-align:right;white-space:nowrap;color:#111;font-size:18px;-webkit-text-stroke:0.2px #fff;">28979</div>
<div style="left:1209px;top:917px;width:76px;height:31px;background:#ffc7ce"></div>
<div style="left:1209px;top:918px;width:73px;height:30px;line-height:30px;text-align:right;white-space:nowrap;color:#9c0006;font-size:18px;-webkit-text-stroke:0.2px #ffc7ce;">1.0063</div>
<div style="left:1284px;top:918px;width:72px;height:30px;line-height:30px;text-align:right;white-space:nowrap;color:#111;font-size:18px;-webkit-text-stroke:0.2px #fff;">28591</div>
<div style="left:1358px;top:917px;width:75px;height:31px;background:#ffc7ce"></div>
<div style="left:1358px;top:918px;width:72px;height:30px;line-height:30px;text-align:right;white-space:nowrap;color:#9c0006;font-size:18px;-webkit-text-stroke:0.2px #ffc7ce;">1.02</div>
<div style="left:1432px;top:918px;width:72px;height:30px;line-height:30px;text-align:right;white-space:nowrap;color:#111;font-size:18px;-webkit-text-stroke:0.2px #fff;">29056</div>
<div style="left:1506px;top:917px;width:73px;height:31px;background:#ffc7ce"></div>
<div style="left:1506px;top:918px;width:70px;height:30px;line-height:30px;text-align:right;white-space:nowrap;color:#9c0006;font-size:18px;-webkit-text-stroke:0.2px #ffc7ce;">1.0037</div>
<div style="left:1644px;top:917px;width:95px;height:31px;background:#ffc7ce"></div>
<div style="left:1644px;top:918px;width:92px;height:30px;line-height:30px;text-align:right;white-space:nowrap;color:#9c0006;font-size:18px;-webkit-text-stroke:0.2px #ffc7ce;">38.5</div>
<svg style="left:1285px;top:918px" width="8" height="8"><path d="M0 0 h7 l-7 7 z" fill="#008000"/></svg>
<svg style="left:1433px;top:918px" width="8" height="8"><path d="M0 0 h7 l-7 7 z" fill="#008000"/></svg>
<div style="left:37px;top:948px;width:106px;height:30px;line-height:30px;text-align:center;white-space:nowrap;color:#111;font-size:18px;-webkit-text-stroke:0.2px #fff;letter-spacing:1px">2021/6/11</div>
<div style="left:141px;top:948px;width:89px;height:30px;line-height:30px;text-align:center;white-space:nowrap;color:#111;font-size:18px;-webkit-text-stroke:0.2px #fff;">29,030.04</div>
<div style="left:229px;top:948px;width:89px;height:30px;line-height:30px;text-align:center;white-space:nowrap;color:#111;font-size:18px;-webkit-text-stroke:0.2px #fff;">29,080.89</div>
<div style="left:317px;top:948px;width:89px;height:30px;line-height:30px;text-align:center;white-space:nowrap;color:#111;font-size:18px;-webkit-text-stroke:0.2px #fff;">28,839.54</div>
<div style="left:405px;top:948px;width:95px;height:30px;line-height:30px;text-align:center;white-space:nowrap;color:#111;font-size:18px;-webkit-text-stroke:0.2px #fff;">28,948.73</div>
<div style="left:499px;top:947px;width:87px;height:31px;background:#fbfbfe"></div>
<div style="left:499px;top:948px;width:87px;height:30px;line-height:30px;text-align:center;white-space:nowrap;color:#111;font-size:18px;-webkit-text-stroke:0.2px #fbfbfe;">-9.83</div>
<div style="left:585px;top:947px;width:87px;height:31px;background:#fcfcff"></div>
<div style="left:585px;top:948px;width:87px;height:30px;line-height:30px;text-align:center;white-space:nowrap;color:#111;font-size:18px;-webkit-text-stroke:0.2px #fcfcff;">0</div>
<div style="left:671px;top:948px;width:127px;height:30px;line-height:30px;text-align:center;white-space:nowrap;color:#111;font-size:18px;-webkit-text-stroke:0.2px #fff;">1,221,150,000</div>
<div style="left:797px;top:947px;width:78px;height:31px;background:#c6efce"></div>
<div style="left:797px;top:948px;width:78px;height:30px;line-height:30px;text-align:center;white-space:nowrap;color:#006100;font-size:18px;">陰</div>
<div style="left:874px;top:948px;width:63px;height:30px;line-height:30px;text-align:center;white-space:nowrap;color:#111;font-size:18px;-webkit-text-stroke:0.2px #fff;">1</div>
<div style="left:936px;top:948px;width:115px;height:30px;line-height:30px;text-align:right;white-space:nowrap;color:#111;font-size:18px;-webkit-text-stroke:0.2px #fff;">-9.83</div>
<div style="left:1133px;top:948px;width:74px;height:30px;line-height:30px;text-align:right;white-space:nowrap;color:#111;font-size:18px;-webkit-text-stroke:0.2px #fff;">28950</div>
<div style="left:1209px;top:947px;width:76px;height:31px;background:#c6efce"></div>
<div style="left:1209px;top:948px;width:73px;height:30px;line-height:30px;text-align:right;white-space:nowrap;color:#006100;font-size:18px;-webkit-text-stroke:0.2px #c6efce;">0.9999</div>
<div style="left:1284px;top:948px;width:72px;height:30px;line-height:30px;text-align:right;white-space:nowrap;color:#111;font-size:18px;-webkit-text-stroke:0.2px #fff;">28605</div>
<div style="left:1358px;top:947px;width:75px;height:31px;background:#ffc7ce"></div>
<div style="left:1358px;top:948px;width:72px;height:30px;line-height:30px;text-align:right;white-space:nowrap;color:#9c0006;font-size:18px;-webkit-text-stroke:0.2px #ffc7ce;">1.012</div>
<div style="left:1432px;top:948px;width:72px;height:30px;line-height:30px;text-align:right;white-space:nowrap;color:#111;font-size:18px;-webkit-text-stroke:0.2px #fff;">29068</div>
<div style="left:1506px;top:947px;width:73px;height:31px;background:#c6efce"></div>
<div style="left:1506px;top:948px;width:70px;height:30px;line-height:30px;text-align:right;white-space:nowrap;color:#006100;font-size:18px;-webkit-text-stroke:0.2px #c6efce;">0.9959</div>
<div style="left:1644px;top:947px;width:95px;height:31px;background:#c6efce"></div>
<div style="left:1644px;top:948px;width:92px;height:30px;line-height:30px;text-align:right;white-space:nowrap;color:#006100;font-size:18px;-webkit-text-stroke:0.2px #c6efce;">42.2</div>
<svg style="left:1285px;top:948px" width="8" height="8"><path d="M0 0 h7 l-7 7 z" fill="#008000"/></svg>
<svg style="left:1433px;top:948px" width="8" height="8"><path d="M0 0 h7 l-7 7 z" fill="#008000"/></svg>
<div style="left:1643px;top:376px;width:97px;height:33px;border:2px solid #217346"></div>
<div style="left:1736px;top:405px;width:6px;height:6px;background:#217346;border:1px solid #fff"></div>
<div style="left:634px;top:866px;width:80px;height:24px;background:rgba(0,0,0,.18);filter:blur(1.5px)"></div>
<div style="left:630px;top:862px;width:81px;height:24px;background:#fff;border:1px solid #767676"></div>
<div style="left:635.6px;top:862.0px;height:24px;line-height:24px;white-space:pre;color:#575757;font-size:15px;-webkit-text-stroke:0.2px #575757;"><span style="display:inline-block;transform:scaleX(0.7237);transform-origin:0 50%">グラフ エリア</span></div>
<div style="left:1895px;top:258px;width:25px;height:717px;background:#e6e6e6"></div>
<div style="left:1898px;top:260px;width:19px;height:19px;background:#fff;border:1px solid #ababab"></div>
<svg style="left:1898px;top:260px" width="19" height="19"><path d="M5 11 h9 l-4.5 -4.5 z" fill="#777"/></svg>
<div style="left:1898px;top:279px;width:19px;height:42px;background:#fff;border:1px solid #ababab"></div>
<div style="left:1898px;top:321px;width:19px;height:636px;background:#dadada"></div>
<div style="left:1898px;top:957px;width:19px;height:19px;background:#fff;border:1px solid #ababab"></div>
<svg style="left:1898px;top:957px" width="19" height="19"><path d="M5 7.5 h9 l-4.5 4.5 z" fill="#777"/></svg>
<div style="left:0px;top:976px;width:1920px;height:27px;background:#e6e6e6"></div>
<div style="left:0px;top:1003px;width:1920px;height:1px;background:#c6c6c6"></div>
<div style="left:114px;top:973.6px;height:24px;line-height:24px;white-space:pre;color:#444;font-size:16px;-webkit-text-stroke:0.2px #444;"><span style="display:inline-block;transform:scaleX(0.9766);transform-origin:0 50%">業種別張り付けば</span></div>
<div style="left:256px;top:976px;width:104px;height:24px;background:#ed7d31"></div>
<div style="left:265.5px;top:973.6px;height:24px;line-height:24px;white-space:pre;color:#262626;font-size:16px;-webkit-text-stroke:0.2px #262626;"><span style="display:inline-block;transform:scaleX(1.0437);transform-origin:0 50%">業種別株価</span></div>
<div style="left:365px;top:976px;width:69px;height:24px;background:#ed7d31"></div>
<div style="left:374px;top:973.6px;height:24px;line-height:24px;white-space:pre;color:#262626;font-size:16px;-webkit-text-stroke:0.2px #262626;"><span style="display:inline-block;transform:scaleX(1.0417);transform-origin:0 50%">業種別</span></div>
<div style="left:440px;top:976px;width:94px;height:24px;background:#ed7d31"></div>
<div style="left:451px;top:973.6px;height:24px;line-height:24px;white-space:pre;color:#262626;font-size:16px;-webkit-text-stroke:0.2px #262626;"><span style="display:inline-block;transform:scaleX(1.0867);transform-origin:0 50%">20日騰落</span></div>
<div style="left:539px;top:976px;width:175px;height:24px;background:#ed7d31"></div>
<div style="left:551px;top:973.6px;height:24px;line-height:24px;white-space:pre;color:#262626;font-size:16px;-webkit-text-stroke:0.2px #262626;"><span style="display:inline-block;transform:scaleX(0.9375);transform-origin:0 50%">日別と株価による診断</span></div>
<div style="left:719px;top:976px;width:107px;height:24px;background:#ed7d31"></div>
<div style="left:729.5px;top:973.6px;height:24px;line-height:24px;white-space:pre;color:#262626;font-size:16px;-webkit-text-stroke:0.2px #262626;"><span style="display:inline-block;transform:scaleX(0.9478);transform-origin:0 50%">累計  データ</span></div>
<div style="left:841px;top:973.6px;height:24px;line-height:24px;white-space:pre;color:#444;font-size:16px;-webkit-text-stroke:0.2px #444;"><span style="display:inline-block;transform:scaleX(0.9199);transform-origin:0 50%">トレンド統計関連</span></div>
<div style="left:972px;top:975px;width:94px;height:26px;background:#fff;border-left:1px solid #aaa;border-right:1px solid #aaa"></div>
<div style="left:975px;top:977px;width:89px;height:20px;background:linear-gradient(#fff 15%,#ff9c9c)"></div>
<div style="left:972px;top:998px;width:94px;height:2px;background:#217346"></div>
<div style="left:986px;top:973.6px;height:24px;line-height:24px;white-space:pre;color:#217346;font-size:16px;-webkit-text-stroke:0.2px #217346;"><span style="display:inline-block;transform:scaleX(1.1073);transform-origin:0 50%">日経225</span></div>
<div style="left:1069px;top:977px;width:11px;height:22px;background:#ff0000"></div>
<svg style="left:0;top:975px" width="1920" height="30" viewBox="0 975 1920 30"><path d="M26.5 989.5 l5 -5 v10 z" fill="#217346"/><path d="M62 989.5 l-5 -5 v10 z" fill="#217346"/><rect x="81" y="991" width="2" height="2" fill="#217346"/><rect x="86" y="991" width="2" height="2" fill="#217346"/><rect x="91" y="991" width="2" height="2" fill="#217346"/><rect x="100" y="979" width="1" height="21" fill="#a0a0a0"/><rect x="253" y="979" width="1" height="21" fill="#a0a0a0"/><rect x="362" y="979" width="1" height="21" fill="#a0a0a0"/><rect x="437" y="979" width="1" height="21" fill="#a0a0a0"/><rect x="536" y="979" width="1" height="21" fill="#a0a0a0"/><rect x="716" y="979" width="1" height="21" fill="#a0a0a0"/><rect x="828" y="979" width="1" height="21" fill="#a0a0a0"/><rect x="1089" y="991" width="2" height="2" fill="#444"/><rect x="1094" y="991" width="2" height="2" fill="#444"/><rect x="1099" y="991" width="2" height="2" fill="#444"/><circle cx="1122" cy="989.5" r="9.5" fill="none" stroke="#666" stroke-width="1.3"/><path d="M1122 984 v11 M1116.5 989.5 h11" stroke="#666" stroke-width="1.5"/><rect x="1149" y="983" width="2" height="3" fill="#aaa"/><rect x="1149" y="988" width="2" height="3" fill="#aaa"/><rect x="1149" y="993" width="2" height="3" fill="#aaa"/><rect x="1166.5" y="980.5" width="18" height="18" fill="#fff" stroke="#ababab"/><path d="M1173 989.5 l4.5 -4.5 v9 z" fill="#777"/><rect x="1184.5" y="980.5" width="658" height="18" fill="#fff" stroke="#ababab"/><rect x="1843" y="981" width="33" height="17" fill="#dadada"/><rect x="1876.5" y="980.5" width="18" height="18" fill="#fff" stroke="#ababab"/><path d="M1888 989.5 l-4.5 -4.5 v9 z" fill="#777"/></svg>
<div style="left:0px;top:1004px;width:1920px;height:26px;background:#f3f3f3"></div>
<div style="left:9.2px;top:1005.5px;height:24px;line-height:24px;white-space:pre;color:#444;font-size:15px;-webkit-text-stroke:0.2px #444;"><span style="display:inline-block;transform:scaleX(0.9750);transform-origin:0 50%">準備完了</span></div>
<div style="left:1538px;top:1004px;width:49px;height:26px;background:#c6c6c6"></div>
<svg style="left:0;top:1004px" width="1920" height="26" viewBox="0 1004 1920 26"><path d="M1554.5 1009.5 h17 v14 h-17 z M1554.5 1014.5 h17 M1554.5 1018.5 h17 M1560 1009.5 v14 M1566 1009.5 v14" fill="none" stroke="#666" stroke-width="1"/><rect x="1604.5" y="1009.5" width="16" height="15" fill="none" stroke="#777"/><path d="M1608 1014.5 h9 M1608 1017.5 h9 M1608 1020.5 h9" stroke="#777"/><path d="M1653.5 1024.5 v-15 h17 v15 M1653.5 1018.5 h6 v-9 M1670.5 1018.5 h-5 v-9" fill="none" stroke="#777"/><rect x="1694" y="1016" width="11" height="1.3" fill="#555"/><rect x="1712" y="1016.5" width="124" height="1" fill="#999"/><rect x="1770" y="1010" width="6" height="14" fill="#666"/><path d="M1841 1017 h12 M1847 1011 v12" stroke="#555" stroke-width="1.3"/></svg>
<div style="left:1869px;top:1005.5px;height:24px;line-height:24px;white-space:pre;color:#444;font-size:15px;-webkit-text-stroke:0.2px #444;"><span style="display:inline-block;transform:scaleX(1.0423);transform-origin:0 50%">100%</span></div>
<div style="left:0px;top:1030px;width:1920px;height:50px;background:linear-gradient(90deg,#cedfe9 0%,#c9e3ea 50%,#c5eaee 100%)"></div>
<div style="left:61px;top:1030px;width:428px;height:50px;background:#fff;border:1px solid #c8c8c8;border-bottom:none"></div>
<svg style="left:0;top:1030px" width="1920" height="50" viewBox="0 1030 1920 50"><path d="M20 1047 l8 -1.2 v8.2 h-8 z M29.5 1045.6 l10.5 -1.6 v10 h-10.5 z M20 1055.5 h8 v8.3 l-8 -1.1 z M29.5 1055.5 h10.5 v10 l-10.5 -1.5 z" fill="#000"/><circle cx="87" cy="1052" r="7" fill="none" stroke="#222" stroke-width="1.5"/><path d="M82 1057 l-7 8" stroke="#222" stroke-width="1.8"/><circle cx="520" cy="1055" r="9.5" fill="none" stroke="#111" stroke-width="2.2"/><path d="M570.5 1046.5 h13 M570.5 1063.5 h13 M573 1049 v12 M581 1049 v12 M570.5 1049.5 v11 M588 1044 v4 M588 1051 v8 M588 1062 v4" fill="none" stroke="#111" stroke-width="1.5"/><rect x="630" y="1046" width="27" height="19" fill="#f4c64f"/><rect x="630" y="1043" width="11" height="5" fill="#e5a821"/><rect x="636" y="1058" width="15" height="6" fill="#3a8ad6"/><rect x="619" y="1077" width="51" height="3" fill="#1c7ad6"/><path d="M691 1048 h29 v21 h-29 z" fill="#222"/><path d="M699 1048 v-3 a6 6 0 0 1 13 0 v3" fill="none" stroke="#222" stroke-width="2"/><rect x="700" y="1053" width="5" height="5" fill="#f25022"/><rect x="706" y="1053" width="5" height="5" fill="#7fba00"/><rect x="700" y="1059" width="5" height="5" fill="#00a4ef"/><rect x="706" y="1059" width="5" height="5" fill="#ffb900"/><path d="M753 1052 l15 -10 l15 10 v17 h-30 z" fill="#1f7fd8"/><path d="M753 1052 l15 10 l15 -10 v17 h-30 z" fill="#49a4f0"/><path d="M756 1050 l12 -8 l12 8 v4 l-12 7 l-12 -7 z" fill="#fff"/><rect x="815" y="1040" width="30" height="30" fill="#fa5a2a"/><circle cx="829.7" cy="1054.5" r="11.7" fill="#fff"/><circle cx="829.5" cy="1052" r="5.5" fill="none" stroke="#f58a6a" stroke-width="1.3"/><path d="M822 1064 q7.5 -7 15 0" fill="none" stroke="#f58a6a" stroke-width="1.3"/><path d="M826 1050 q3 -3 7 0" fill="none" stroke="#f58a6a" stroke-width="1.2"/><defs><linearGradient id="mg" x1="0" y1="0" x2="0" y2="1"><stop offset="0" stop-color="#5a86f0"/><stop offset="1" stop-color="#1f3fd8"/></linearGradient><linearGradient id="eg" x1="0" y1="1" x2="1" y2="0"><stop offset="0" stop-color="#0b57a8"/><stop offset=".55" stop-color="#2aa6e0"/><stop offset="1" stop-color="#6ee27a"/></linearGradient></defs><rect x="879" y="1041" width="26" height="26.5" rx="3.5" fill="url(#mg)"/><text x="883.5" y="1059" font-size="16" fill="#fff" font-family="Liberation Sans">@</text><rect x="883" y="1062" width="18" height="3" fill="#dfe6ff" opacity=".8"/><rect x="867" y="1077" width="51" height="3" fill="#1c7ad6"/><circle cx="953.5" cy="1055" r="15" fill="url(#eg)"/><path d="M942 1060 q1 -9 10 -9 q8 0 9 6 q-5 -2 -9 1 q-4 4 2 8 q6 3 14 -2 q-4 7 -12 7 q-11 0 -14 -11 z" fill="#0f5fae"/><ellipse cx="956" cy="1057.5" rx="5.5" ry="4" fill="#cfe2ea"/><rect x="929" y="1077" width="51" height="3" fill="#1c7ad6"/><rect x="986" y="1030" width="61" height="50" fill="#eaf3f6" opacity=".85"/><rect x="1008" y="1041" width="22" height="27" rx="1.5" fill="#21a366"/><rect x="1019" y="1041" width="11" height="7" fill="#33c481"/><rect x="1008" y="1048" width="22" height="6.5" fill="#21a366"/><rect x="1008" y="1054.5" width="22" height="6.5" fill="#107c41"/><rect x="1008" y="1061" width="22" height="7" rx="1" fill="#185c37"/><rect x="1001" y="1047" width="15" height="15" rx="1" fill="#107c41"/><path d="M1005 1050.5 l7 8 M1012 1050.5 l-7 8" stroke="#fff" stroke-width="1.8"/><rect x="986" y="1077" width="61" height="3" fill="#1c7ad6"/><defs><linearGradient id="wg" x1="0" y1="0" x2="1" y2="1"><stop offset="0" stop-color="#eaf5fd"/><stop offset="1" stop-color="#8fc4ee"/></linearGradient></defs><circle cx="1459" cy="1052" r="6.5" fill="url(#wg)"/><circle cx="1467" cy="1055" r="5.5" fill="url(#wg)"/><circle cx="1453" cy="1057" r="4.5" fill="url(#wg)"/><rect x="1453" y="1055" width="16" height="7" rx="3" fill="url(#wg)"/><path d="M1460.5 1057 q-3.5 4.5 -3.5 6 a3.5 3.5 0 0 0 7 0 q0 -1.5 -3.5 -6 z" fill="#4a9ded"/><path d="M1592 1060 l7 -7 l7 7" fill="none" stroke="#111" stroke-width="1.4"/><path d="M1619 1060 a5 5 0 0 1 2 -9 a7 7 0 0 1 13 -1 a5 5 0 0 1 4 10 z" fill="#666" stroke="#222" stroke-width="1"/><rect x="1649.5" y="1049.5" width="16" height="11" fill="none" stroke="#111" stroke-width="1.3"/><rect x="1652" y="1052" width="11" height="6" fill="#111"/><rect x="1666" y="1053" width="2" height="4" fill="#111"/><rect x="1650" y="1046" width="3" height="3" fill="#111"/><path d="M1681 1063 a14 14 0 0 1 16 -14 M1684 1064 a10 10 0 0 1 11 -11 M1688 1064 a6 6 0 0 1 6 -6" fill="none" stroke="#111" stroke-width="1.3"/><circle cx="1694" cy="1063" r="1.5" fill="#111"/><path d="M1710 1051 h4 l6 -5 v18 l-6 -5 h-4 z" fill="none" stroke="#111" stroke-width="1.2"/><path d="M1723 1050 q3 5 0 10 M1726 1047 q5 8 0 16" fill="none" stroke="#111" stroke-width="1"/><path d="M1871.5 1046.5 h17 v13 h-11 l-6 5 z" fill="none" stroke="#111" stroke-width="1.3"/><rect x="1914" y="1030" width="1" height="50" fill="#9aa"/></svg>
<div style="left:110px;top:1043.0px;height:24px;line-height:24px;white-space:pre;color:#222;font-size:17px;-webkit-text-stroke:0.2px #222;"><span style="display:inline-block;transform:scaleX(0.9196);transform-origin:0 50%">ここに入力して検索</span></div>
<div style="left:1486px;top:1044.5px;height:24px;line-height:24px;white-space:pre;color:#111;font-size:18px;-webkit-text-stroke:0.2px #111;"><span style="display:inline-block;transform:scaleX(0.9075);transform-origin:0 50%">26°C</span></div>
<div style="left:1535px;top:1044.5px;height:24px;line-height:24px;white-space:pre;color:#111;font-size:17px;-webkit-text-stroke:0.2px #111;"><span style="display:inline-block;transform:scaleX(1.0000);transform-origin:0 50%">小雨</span></div>
<div style="left:1740px;top:1043.5px;height:24px;line-height:24px;white-space:pre;color:#111;font-size:24px;-webkit-text-stroke:0.2px #111;"><span style="display:inline-block;transform:scaleX(0.9366);transform-origin:0 50%">A</span></div>
<div style="left:1790px;top:1031.0px;height:24px;line-height:24px;white-space:pre;color:#111;font-size:16px;-webkit-text-stroke:0.2px #111;"><span style="display:inline-block;transform:scaleX(0.8740);transform-origin:0 50%">20:16</span></div>
<div style="left:1770px;top:1055.0px;height:24px;line-height:24px;white-space:pre;color:#111;font-size:16px;-webkit-text-stroke:0.2px #111;"><span style="display:inline-block;transform:scaleX(0.9366);transform-origin:0 50%">2021/07/12</span></div>
</body></html>
